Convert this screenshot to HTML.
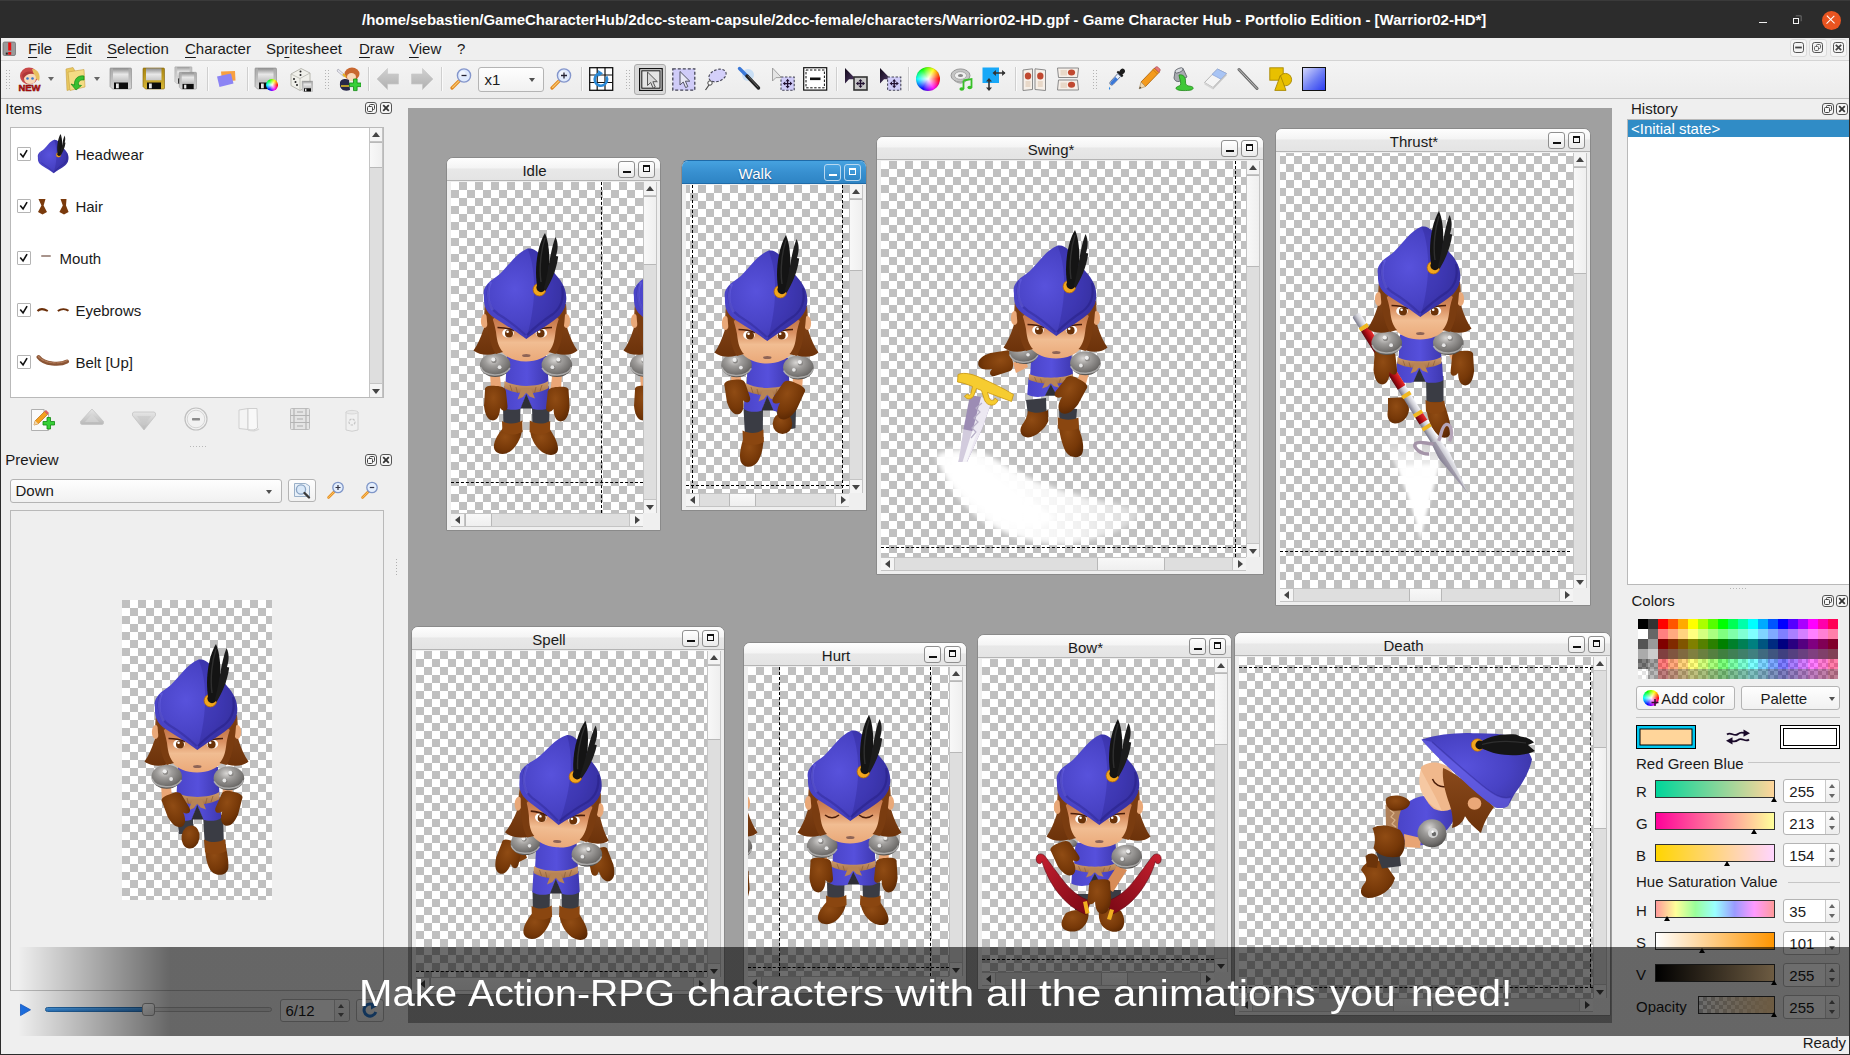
<!DOCTYPE html>
<html><head><meta charset="utf-8"><title>Game Character Hub</title>
<style>
*{margin:0;padding:0;box-sizing:border-box}
html,body{width:1850px;height:1055px;overflow:hidden;background:#efefef;font-family:"Liberation Sans",sans-serif;font-size:15px;color:#1a1a1a}
body{position:relative}
i,b{display:block;position:absolute;font-style:normal;font-weight:normal}
svg{display:block}
#title{position:absolute;left:0;top:0;width:1850px;height:38px;background:#2c2c2c;border-top:1px solid #3a3a3a}
#ttext{position:absolute;left:362px;top:10px;white-space:nowrap;color:#fff;font-weight:bold;font-size:14.98px;line-height:18px}
#wmin{left:1759px;top:20.7px;width:8.2px;height:1.4px;background:#f0f0f0}
#wmax{left:1793px;top:16.5px;width:6.4px;height:6.4px;border:1.3px solid #f4f4f4;box-shadow:2px -2px 0 -0.2px #2c2c2c, 2.6px -2.6px 0 -0.2px #9a9a9a}
#wclose{left:1821.5px;top:9.5px;width:19px;height:19px;border-radius:50%;background:#e95420}
#wclose:before,#wclose:after{content:"";position:absolute;left:3.8px;top:8.8px;width:11.4px;height:1.4px;background:#fff;transform:rotate(45deg)}
#wclose:after{transform:rotate(-45deg)}
#menubar{position:absolute;left:1px;top:38px;width:1848px;height:22px;background:#efefef}
#menubar span{position:absolute;top:2px;line-height:18px;white-space:nowrap}
#menubar u{text-decoration:underline;text-underline-offset:2.5px;text-decoration-thickness:1.4px}
#toolbar{position:absolute;left:1px;top:60px;width:1848px;height:39px;background:linear-gradient(#f4f4f4,#ececec);border-top:1px solid #d4d4d4;border-bottom:1px solid #bdbdbd}
#toolbar2>*{position:absolute}
#mdi{position:absolute;left:408px;top:108px;width:1204px;height:915px;background:#a0a0a0;overflow:hidden}
#status{position:absolute;left:1px;top:1036px;width:1848px;height:18px}
#status span{position:absolute;right:3px;top:-2px;line-height:18px}
#banner{position:absolute;left:0;top:947px;width:1850px;height:89px;background:linear-gradient(90deg,rgba(0,0,0,0) 18px,rgba(0,0,0,.573) 170px)}
#banner span{position:absolute;top:25px;color:#fff;font-size:36.7px;line-height:44px;white-space:nowrap;transform-origin:0 0}
#frame{position:absolute;left:0;top:38px;width:1850px;height:1017px;border:1px solid #2c2c2c;border-top:0;pointer-events:none}
/* dock titles */
.dt{font-size:15px;line-height:18px;white-space:nowrap}
.dbtn{width:11px;height:11px;border:1px solid #555;border-radius:2px}
/* MDI windows */
.win{position:absolute;background:#efefef;border:1px solid #8a8a8a;border-radius:7px 7px 0 0;box-shadow:0 0 0 0 #000}
.win .tb{position:absolute;left:0;right:0;top:0;height:23px;border-radius:6px 6px 0 0;background:linear-gradient(#fefefe,#f4f4f4 45%,#e8e8e8 50%,#e4e4e4);border-bottom:1px solid #b4b4b4}
.win.act .tb{background:linear-gradient(#46a2e0,#3890d0 50%,#2e84c4);border-bottom:1px solid #1e6aa8}
.win.act{border-color:#1e6aa8 #8a8a8a #8a8a8a #8a8a8a}
.tt{position:absolute;top:3.5px;width:120px;text-align:center;line-height:18px;font-size:15px;white-space:nowrap}
.win.act .tt{color:#fff;text-shadow:0 1px 1px #1a4a80}
.bmin,.bmax{top:2.5px;width:17px;height:17px;border:1px solid #8f8f8f;border-radius:3px;background:linear-gradient(#fff,#ebebeb)}
.bmin{right:25px}.bmax{right:5px}
.bmin:after{content:"";position:absolute;left:4px;top:9.5px;width:8px;height:2.2px;background:#111}
.bmax:after{content:"";position:absolute;left:3.6px;top:3.4px;width:5.4px;height:4.2px;border:1.3px solid #111;border-top-width:2.6px}
.win.act .bmin,.win.act .bmax{background:linear-gradient(#4aa4e2,#2f86c6);border-color:#b8d8f0}
.win.act .bmin:after{background:#fff}.win.act .bmax:after{border-color:#fff}
.vp{position:absolute;left:4px;top:24px;overflow:hidden;background:conic-gradient(#c0c0c0 25%,#fff 0 50%,#c0c0c0 0 75%,#fff 0) 0 0/16px 16px}
.vp>*{position:absolute}
.c{position:absolute;overflow:visible}
.dv{width:0;border-left:1px dashed #000}
.dh{height:0;border-top:1px dashed #000}
.vsb{position:absolute;right:3px;top:24px;width:14px;background:#dedede;border-left:1px solid #c4c4c4;border-right:1px solid #c4c4c4}
.hsb{position:absolute;left:4px;bottom:3px;height:14px;background:#dedede;border-top:1px solid #c4c4c4;border-bottom:1px solid #c4c4c4}
.vsb b{left:0;width:12px;background:linear-gradient(90deg,#f8f8f8,#efefef);border-top:1px solid #b8b8b8;border-bottom:1px solid #b8b8b8}
.hsb b{top:0;height:12px;background:linear-gradient(#f8f8f8,#efefef);border-left:1px solid #b8b8b8;border-right:1px solid #b8b8b8}
.au,.ad{left:0;width:12px;height:14px;background:#f4f4f4}
.au{top:0;border-bottom:1px solid #c4c4c4}.ad{bottom:0;border-top:1px solid #c4c4c4}
.al,.ar{top:0;height:12px;width:14px;background:#f4f4f4}
.al{left:0;border-right:1px solid #c4c4c4}.ar{right:0;border-left:1px solid #c4c4c4}
.au:after,.ad:after,.al:after,.ar:after{content:"";position:absolute;width:0;height:0;border:4px solid transparent}
.au:after{left:2px;top:0px;border-bottom:5px solid #444;border-top-width:0;top:4px}
.ad:after{left:2px;top:5px;border-top:5px solid #444;border-bottom-width:0}
.al:after{top:2px;left:4px;border-right:5px solid #444;border-left-width:0}
.ar:after{top:2px;left:5px;border-left:5px solid #444;border-right-width:0}
#left,#right,#toolbar2{position:absolute;left:0;top:0;width:0;height:0;overflow:visible}
#left>*,#right>*{position:absolute}
.lst{background:#fff;border:1px solid #b9b9b9}
.pf{border:1px solid #b9b9b9;background:#efefef}
.ck{background:conic-gradient(#c0c0c0 25%,#fff 0 50%,#c0c0c0 0 75%,#fff 0) 0 0/16px 16px}
.cb{width:14px;height:14px;background:#fff;border:1px solid #b4b4b4;border-radius:1px;overflow:visible}

.combo,.btn,.spin{border:1px solid #b4b4b4;border-radius:3px;background:linear-gradient(#fefefe,#f1f1f1)}
.combo span,.spin span{position:absolute;line-height:18px;white-space:nowrap}
.ca{width:0;height:0;border:3.5px solid transparent;border-top:4.5px solid #505050;border-bottom-width:0}
.spin{background:#fff}
.sa{right:0;top:0;width:15px;height:100%;border-left:1px solid #c8c8c8;background:linear-gradient(#fbfbfb,#ededed);border-radius:0 3px 3px 0}
.sa:before,.sa:after{content:"";position:absolute;left:3px;width:0;height:0;border:3.6px solid transparent}
.sa:before{top:4px;border-bottom:4.6px solid #666;border-top-width:0}
.sa:after{bottom:4px;border-top:4.6px solid #666;border-bottom-width:0}

</style></head><body>
<svg width="0" height="0" style="position:absolute"><defs>
<radialGradient id="gHat" cx="0.38" cy="0.45" r="0.75"><stop offset="0" stop-color="#5852dc"/><stop offset="0.55" stop-color="#4842c4"/><stop offset="1" stop-color="#38329e"/></radialGradient>
<linearGradient id="gFace" x1="0" y1="0" x2="0" y2="1"><stop offset="0" stop-color="#b8683c"/><stop offset="0.38" stop-color="#d98f60"/><stop offset="0.62" stop-color="#f1bd92"/><stop offset="1" stop-color="#eaa878"/></linearGradient>
<linearGradient id="gHair" x1="0" y1="0" x2="0" y2="1"><stop offset="0" stop-color="#8a4a1c"/><stop offset="1" stop-color="#6c320a"/></linearGradient>
<radialGradient id="gMetal" cx="0.42" cy="0.3" r="0.8"><stop offset="0" stop-color="#d8d6d4"/><stop offset="0.3" stop-color="#a09e9c"/><stop offset="0.7" stop-color="#72706e"/><stop offset="1" stop-color="#403e3c"/></radialGradient>
<radialGradient id="gLeather" cx="0.4" cy="0.35" r="0.8"><stop offset="0" stop-color="#904c14"/><stop offset="0.6" stop-color="#763808"/><stop offset="1" stop-color="#542402"/></radialGradient>
<linearGradient id="gTunic" x1="0" y1="0" x2="1" y2="0"><stop offset="0" stop-color="#4a44c8"/><stop offset="0.5" stop-color="#5650dc"/><stop offset="1" stop-color="#3e38b0"/></linearGradient>
<linearGradient id="gBelt" x1="0" y1="0" x2="0" y2="1"><stop offset="0" stop-color="#d09c6c"/><stop offset="1" stop-color="#a87448"/></linearGradient>

<!-- head, front -->
<g id="hat">
<path d="M67.7,28.6 C62,31 57,35 53,39.5 C48,45 44,50 39.8,54 C35,58 31,60 27.9,63.4 C24,68 23,71 23.9,76 C24,81 24,84 25.2,87.3 C27,92 30,95 34.5,97.9 C41,102 47,106 53,109.8 C58,113 62,116 66.3,119.1 C70,116 75,113 79.6,109.8 C86,106 92,102 96.9,97.9 C101,95 103,91 104.8,87.3 C106,83 106.5,80 106.2,76.7 C106,72 104.5,67 102.2,63.4 C100,59 96,55 92.9,51.4 C88,45 84,40 79.6,34.2 C76,30 72,28 67.7,28.6 Z" fill="url(#gHat)"/>
<path d="M67.7,28.6 C72,28 76,30 79.6,34.2 C84,40 88,45 92.9,51.4 C96,55 100,59 102.2,63.4 C104.5,67 106,72 106.2,76.7 C106.5,80 106,83 104.8,87.3 C103,91 101,95 96.9,97.9 C92,102 86,106 79.6,109.8 C75,113 70,116 66.3,119.1 C72,100 80,60 67.7,28.6 Z" fill="#241c86" opacity="0.28"/>
<path d="M29,64 C26,76 28,87 38,94 C48,100 57,107 65.5,115" fill="none" stroke="#2c2690" stroke-width="2.2" opacity="0.45"/>
<path d="M102,66 C104,77 102,87 93,94 C84,100 75,107 67,115" fill="none" stroke="#201a78" stroke-width="2.2" opacity="0.4"/>
<path d="M31,62 C27,70 27,82 33,90" fill="none" stroke="#7a76f0" stroke-width="2.5" opacity="0.35"/>
<circle cx="79.4" cy="69.6" r="6.3" fill="#f2a61c"/><circle cx="79.4" cy="69.6" r="6.3" fill="none" stroke="#b86c08" stroke-width="0.8"/>
<circle cx="81" cy="67.6" r="4.6" fill="#17130f"/>
<path d="M78,70 C73.5,52 77,26 85,13 C90.5,26 91,50 84.5,69 Z" fill="#141414"/>
<path d="M84,68 C88.5,52 90,31 95.5,17 C99,24 97.5,31 96,36 L98.2,36.5 C96.5,50 91,62 85.5,71 Z" fill="#1c1c1c"/>
<path d="M81,62 C79,48 81,30 85,18" fill="none" stroke="#3a3a3a" stroke-width="1.4" opacity="0.7"/>
</g>
<g id="hairback">
<path d="M25,84 C23.5,96 25,104 23.5,109 C21,117 17.5,125 13.5,130.5 C20,136 33,136 42,131 L90,131 C99,136 112,136 117.5,130.5 C113.5,125 110,117 107.5,109 C106,104 107.5,96 106,84 Z" fill="url(#gHair)"/>
<ellipse cx="24.5" cy="101" rx="3.6" ry="7" fill="#e9a878"/>
<ellipse cx="106.5" cy="101" rx="3.6" ry="7" fill="#e9a878"/>
</g>
<g id="facebase">
<path d="M32,102 C32,88 100,88 100,102 C101,126 88,141.5 66,141.5 C44,141.5 31,126 32,102 Z" fill="url(#gFace)"/>
<path d="M26,86 C30,92 34,100 36,112 C37,122 39,128 43,132 L36,134 C30,126 27,110 26,86 Z" fill="#7a3c10"/>
<path d="M105.5,86 C101.5,92 97.5,100 95.5,112 C94.5,122 92.5,128 88.5,132 L95.5,134 C101.5,126 104.5,110 105.5,86 Z" fill="#7a3c10"/>
<ellipse cx="66.3" cy="135.6" rx="4.2" ry="1.5" fill="#8e6456"/>
</g>
<g id="eyes">
<ellipse cx="48" cy="113" rx="5.8" ry="4.6" fill="#fff"/><circle cx="49" cy="113.4" r="4" fill="#6a3208"/><circle cx="47.6" cy="111.8" r="1.3" fill="#fff"/>
<path d="M37.5,107.5 C42,107.5 48,108 54,110.5" fill="none" stroke="#4a1c08" stroke-width="1.7"/>
<ellipse cx="81.4" cy="113" rx="5.8" ry="4.6" fill="#fff"/><circle cx="80.6" cy="113.4" r="4" fill="#6a3208"/><circle cx="79.2" cy="111.8" r="1.3" fill="#fff"/>
<path d="M92,107.5 C87.5,107.5 81.5,108 75.5,110.5" fill="none" stroke="#4a1c08" stroke-width="1.7"/>
</g>
<g id="eyesclosed">
<path d="M41,113 C45,116.5 51,116.5 55,113" fill="none" stroke="#4a1c08" stroke-width="1.5"/>
<path d="M75,113 C79,116.5 85,116.5 89,113" fill="none" stroke="#4a1c08" stroke-width="1.5"/>
</g>
<g id="head"><use href="#hairback"/><use href="#facebase"/><use href="#eyes"/><use href="#hat"/></g>
<g id="headc"><use href="#hairback"/><use href="#facebase"/><use href="#eyesclosed"/><use href="#hat"/></g>

<!-- shoulder pads -->
<g id="padL"><ellipse cx="35.2" cy="144.9" rx="15.3" ry="12" fill="url(#gMetal)"/><path d="M20.5,147 C24,157 44,158 50,148" fill="none" stroke="#c8c8c8" stroke-width="1.5" opacity="0.7"/><circle cx="34" cy="140.4" r="2.6" fill="#8a8886"/><circle cx="33.3" cy="139.5" r="2.1" fill="#f0f0f0"/><circle cx="40.2" cy="148" r="2.4" fill="#807e7c"/><circle cx="39.6" cy="147.2" r="1.9" fill="#e6e6e6"/></g>
<g id="padR"><ellipse cx="96.9" cy="144.9" rx="15.3" ry="12" fill="url(#gMetal)"/><path d="M82,148 C88,158 108,157 111.5,147" fill="none" stroke="#c8c8c8" stroke-width="1.5" opacity="0.7"/><circle cx="99" cy="140.4" r="2.6" fill="#8a8886"/><circle cx="98.3" cy="139.5" r="2.1" fill="#f0f0f0"/><circle cx="93" cy="148" r="2.4" fill="#807e7c"/><circle cx="92.4" cy="147.2" r="1.9" fill="#e6e6e6"/></g>

<!-- gloves -->
<path id="gloveL" d="M25,170 C24,166 30,165 36,166 C42,166 46,168 46,172 L47.5,186 C48,190 45,192 42,190 L40,188 C40,194 38,200 33,200.5 C27,200 25,194 24,186 Z" fill="url(#gLeather)"/>
<path id="gloveR" d="M108.6,171 C109.6,167 103.6,166 97.6,167 C91.6,167 87.6,169 87.6,173 L86.1,187 C85.6,191 88.6,193 91.6,191 L93.6,189 C93.6,195 95.6,201 100.6,201.5 C106.6,201 108.6,195 109.6,187 Z" fill="url(#gLeather)"/>

<!-- torso + belt + skirt -->
<g id="torso">
<path d="M47,136 L87,136 L88.5,164 C80,168 54,168 45.5,164 Z" fill="url(#gTunic)"/>
<path d="M44,166 C55,173 78,173 89,166 L90.2,187 C86,190.5 76,190.5 72,188.5 L66.3,175 L61,188.5 C57,190.5 47,190.5 42.8,187 Z" fill="url(#gTunic)"/>
<path d="M66.3,174 L60.5,188.5 L72.5,188.5 Z" fill="#2e2e36"/>
<path d="M44.5,161 C55,167.5 78,167.5 88.2,161 L88.6,168 C78,175 55,175 44.1,168 Z" fill="url(#gBelt)"/>
<path d="M50,165 l2,6 M56,167 l1.5,6 M76,167 l-1.5,6 M82,165 l-2,6" stroke="#8a5c34" stroke-width="1" fill="none" opacity="0.7"/>
<path d="M61.5,168.5 L71,168.5 L75,178.5 L69.5,176.5 L66.3,172.5 L63,177 L57.5,179.5 Z" fill="#b88454"/>
</g>
<!-- legs idle -->
<g id="legsIdle"><g id="legL">
<path d="M43,186 L60.5,186 L60,208 L43.5,208 Z" fill="#3a3c44"/>
<path d="M43,208 C38,214 33,222 34,228 C36,235.5 46,235.5 52,230 C58,224 62,216 62,208 Z" fill="url(#gLeather)"/>
<path d="M42,201 C48,204.5 56,204.5 62.3,200.5 L62.6,212 C55,215.5 48,215.5 42.4,211.5 Z" fill="#8a4610"/>
</g><g id="legR"><path d="M72,186 L89.6,186 L89,208 L72.5,208 Z" fill="#3a3c44"/><path d="M70,208 C70,216 74,226 82,232 C90,237 98,235.5 98,228.5 C98,222 93,214 89,208 Z" fill="url(#gLeather)"/>
<path d="M69.8,200.5 C76,204.5 84,204.5 90.2,201 L90,211.5 C84,215.5 76,215.5 69.6,212 Z" fill="#8a4610"/>
</g></g>
<g id="armsIdle">
<path d="M30,152 L39.5,152 L41.5,170 L31,170 Z" fill="#eaa676"/><path d="M92.5,152 L102,152 L101,170 L90.5,170 Z" fill="#eaa676"/>
</g>

<symbol id="idle" viewBox="0 0 140 250" overflow="visible"><use href="#legsIdle"/><use href="#armsIdle"/><use href="#torso"/><use href="#gloveL"/><use href="#gloveR"/><use href="#padL"/><use href="#padR"/><use href="#head"/></symbol>
<symbol id="pview" viewBox="0 0 140 250" overflow="visible">
<path d="M46,187 L62,187 L62.5,203 L48,203 Z" fill="#3a3c44"/>
<ellipse cx="59.5" cy="206" rx="9" ry="11.5" transform="rotate(8 59.5 206)" fill="url(#gLeather)"/>
<path d="M72,184 L92,184 L93,217 L74,217 Z" fill="#3a3c44"/>
<path d="M74,214 C74,224 76,236 81,241 C86,245.5 96,245 97.3,237 C98,230 96,222 94.5,213 Z" fill="url(#gLeather)"/>
<path d="M73,208.5 C79,212 88,212 94.2,208 L95,220 C89,224 80,224 74,221 Z" fill="#8a4610"/>
<use href="#armsIdle"/><use href="#torso"/>
<g transform="translate(10.5,-4.5) rotate(-24 36 183)"><use href="#gloveL"/></g>
<g transform="translate(-1,-7) rotate(18 98 184)"><use href="#gloveR"/></g>
<use href="#padL" transform="translate(.5,.8)"/><use href="#padR" transform="translate(1,2.3)"/><use href="#head"/>
</symbol>
<symbol id="walk" viewBox="0 0 140 250" overflow="visible">
<path d="M75,188 L95,188 L94.5,206 C90,208 84,207 80,204 Z" fill="#3a3c44"/>
<ellipse cx="81.5" cy="201.5" rx="9.8" ry="10.5" fill="url(#gLeather)"/>
<path d="M42.5,186 L62,186 L61.8,214 L44,214 Z" fill="#3a3c44"/>
<path d="M42.5,216 C40,224 38,232 39.5,239 C42,246.5 52,246.5 56.5,240 C61,233 62.5,224 62.5,215 Z" fill="url(#gLeather)"/>
<path d="M41.5,208.5 C48,212 56,212 62.4,207.5 L62.8,220 C56,224 48,224 42,220 Z" fill="#8a4610"/>
<use href="#armsIdle"/><use href="#torso"/>
<use href="#gloveL" transform="translate(1,-8.5) rotate(-12 36 183)"/>
<g transform="translate(-12,-6) rotate(28 98 184) scale(1.12) translate(-10.5,-19.7)"><use href="#gloveR"/></g>
<use href="#padL" transform="translate(.3,-1.6)"/><use href="#padR" transform="translate(.5,.6)"/><use href="#head"/></symbol>
<symbol id="swing" viewBox="0 0 140 250" overflow="visible">
<defs><linearGradient id="gSw" x1="0" y1="0" x2="1" y2="0"><stop offset="0" stop-color="#fff" stop-opacity=".92"/><stop offset=".35" stop-color="#fff" stop-opacity=".96"/><stop offset=".65" stop-color="#fff" stop-opacity=".8"/><stop offset=".88" stop-color="#fff" stop-opacity=".5"/><stop offset="1" stop-color="#fff" stop-opacity=".1"/></linearGradient>
<filter id="fBlur" x="-20%" y="-20%" width="140%" height="140%"><feGaussianBlur stdDeviation="2.6"/></filter>
<linearGradient id="gBlade" x1="0" y1="0" x2="1" y2="0"><stop offset="0" stop-color="#8474a4"/><stop offset=".5" stop-color="#a498b8"/><stop offset=".52" stop-color="#f4f4f8"/><stop offset="1" stop-color="#e0e0e8"/></linearGradient></defs>
<g filter="url(#fBlur)"><path d="M-54,238 C-36,228 -10,232 12,246 C40,264 80,280 160,293 C138,312 108,324 76,327.5 C40,328 8,316 -14,298 C-36,278 -48,260 -54,238 Z" fill="url(#gSw)"/>
<path d="M-50,244 C-38,236 -20,240 -6,250 C14,264 36,282 66,300 C50,318 20,312 -8,292 C-30,276 -44,260 -50,244 Z" fill="#fff" opacity=".9"/></g>
<path d="M-20,178 L2.5,182 L-8,212 L-23,245 L-31.5,245 L-26.5,212 Z" fill="#9c8cb4"/>
<path d="M-9,180 L2.5,182 L-8,212 L-23,245 L-27.5,245 L-17,212 Z" fill="#ece8f2"/>
<path d="M-28,212 L-13,215 L-23.5,245 L-31.5,245 Z" fill="#fff" opacity=".55"/>
<path d="M-8,186 l-6,5 l4,4 l-6,6 l4,4 l-6,6 l4,4 l-5,6" fill="none" stroke="#b8b0c8" stroke-width="1.2"/>
<path d="M-32,157.5 C-25,154.5 -15,158 -8,161.5 C2,166 13,171 23.5,177.5 L21.5,184.5 C12,181 4,178 -2.5,175.5 L-1,180.5 C0.5,184.5 4,184 5,181 L8,183.5 C5.5,190 -3,189.5 -5.5,183 L-8.5,173.5 L-13.5,171.5 L-16,178 C-18,183 -23.5,183 -25.5,179 L-22.5,177 C-21,179 -19.5,178 -19,176 L-17.5,169.5 C-22.5,167.5 -27.5,165.5 -32.5,165 Z" fill="#f6cc30" stroke="#c89410" stroke-width=".8"/>
<path d="M36,183 L56,181 L56.5,197 L38,198 Z" fill="#3a3c44"/><path d="M69,190 L87,192 L86,206 L69.5,205 Z" fill="#3a3c44"/>
<path d="M38,194 C46,197 52,196 58,193 L58.4,204 C55,212 46,220 38,220.5 C31,220 28.5,214 32,208 C35,204 37,200 38,194 Z" fill="url(#gLeather)"/>
<path d="M68,201 C74,204 82,204 88,201 L89,212 C93,222 94.5,232 92,237 C89,242 80,241 76,235 C72,228 69,216 68,201 Z" fill="url(#gLeather)"/>
<path d="M67.6,200 C74,203.5 82,203.5 88.4,200.5 L88.8,211 C82,214.5 74,214.5 68,211.5 Z" fill="#8a4610"/>
<g transform="translate(-5.5,28) scale(1,.8)"><use href="#torso"/></g>
<path d="M91,152 L100,153 L95,170 L86,168 Z" fill="#eaa676"/>
<g transform="translate(-19,-6) rotate(32 98 184) scale(1.1) translate(-9,-16.7)"><use href="#gloveR"/></g>
<path d="M23,146 L34,140 L38,150 L26,156 Z" fill="#eaa676"/>
<g transform="translate(-30,-36) rotate(78 36 183)"><use href="#gloveL"/></g>
<use href="#padL" transform="translate(0,-3.6) scale(.96)"/><use href="#padR" transform="translate(-1.5,1.3)"/><use href="#head"/></symbol>
<symbol id="thrust" viewBox="0 0 140 250" overflow="visible">
<defs><linearGradient id="gTr" x1="0" y1="0" x2="0" y2="1"><stop offset="0" stop-color="#fff" stop-opacity=".05"/><stop offset=".2" stop-color="#fff" stop-opacity=".55"/><stop offset=".45" stop-color="#fff" stop-opacity=".95"/><stop offset="1" stop-color="#fff" stop-opacity="1"/></linearGradient>
<linearGradient id="gShaft" x1="0" y1="0" x2="0" y2="1"><stop offset="0" stop-color="#f8f8fc"/><stop offset=".5" stop-color="#c8c8d0"/><stop offset="1" stop-color="#78788a"/></linearGradient>
<linearGradient id="gRed" x1="0" y1="0" x2="0" y2="1"><stop offset="0" stop-color="#e83030"/><stop offset=".55" stop-color="#b00c14"/><stop offset="1" stop-color="#60040a"/></linearGradient><filter id="fBlur2" x="-20%" y="-10%" width="140%" height="120%"><feGaussianBlur stdDeviation="1.8"/></filter></defs>
<g filter="url(#fBlur2)"><path d="M26,236 L94,236 C86,262 74,300 66.5,343 C58,300 40,262 26,236 Z" fill="url(#gTr)"/><path d="M44,268 L86,266 C80,290 72,316 66.5,340 C60,312 52,290 44,268 Z" fill="#fff" opacity=".9"/></g>
<path d="M34,200 L54,199 L55,212 C54,220 48,225.5 41,225.5 C34,225 32.5,218 34,212 Z" fill="url(#gLeather)"/>
<path d="M72,178 L89.5,178 L89.5,206 L72.5,206 Z" fill="#3a3c44"/>
<path d="M72,204 C72,216 76,230 84,237 C90,242 97.5,240 97,232 C96.5,224 93,214 90,204 Z" fill="url(#gLeather)"/>
<path d="M71.5,202 C78,205.5 84,205.5 90.4,202.5 L90.6,213 C84,216.5 78,216.5 72,213.5 Z" fill="#8a4610"/>
<g transform="translate(-1,14) scale(1,.9)"><use href="#torso"/></g>
<g transform="translate(1.9,116.6) rotate(57.9)">
<rect x="0" y="-4.3" width="152" height="8.6" rx="1.5" fill="url(#gShaft)"/>
<rect x="17" y="-4.5" width="69" height="9" fill="url(#gRed)"/>
<rect x="13" y="-4.9" width="4" height="9.8" fill="#f0b820"/><rect x="93" y="-4.9" width="4" height="9.8" fill="#f0b820"/><rect x="115" y="-4.9" width="4" height="9.8" fill="#f0b820"/><rect x="119" y="-4.5" width="8" height="9" fill="url(#gRed)"/><rect x="131" y="-4.9" width="4" height="9.8" fill="#f0b820"/>
<path d="M148,-4.4 L166,-6.2 L211,0 L166,6.2 L148,4.4 Z" fill="url(#gShaft)"/><path d="M150,0 L211,0 L166,6.2 L148,4.4 Z" fill="#8c8498" opacity=".6"/>
<path d="M151,3 C147,9 140,13 141,18 C143,23 153,19 157,12" fill="none" stroke="#a494a8" stroke-width="3.4"/>
<path d="M151,-3 C147,-9 140,-13 141,-18 C143,-23 153,-19 157,-12" fill="none" stroke="#b4a4b8" stroke-width="3.4"/>
</g><path d="M29,152 L39,152 L40,164 L30,164 Z" fill="#eaa676"/>
<use href="#gloveL" transform="translate(-4.5,-14)"/>

<path d="M92,150 L102,150 L108,160 L98,163 Z" fill="#eaa676"/>
<use href="#gloveR" transform="translate(10.5,-14)"/>
<use href="#padL" transform="translate(-2.5,0)"/><use href="#padR" transform="translate(-2.6,0)"/><use href="#head"/></symbol>
<symbol id="spell" viewBox="0 0 140 250" overflow="visible">
<g transform="translate(-7.5,-1)"><use href="#legsIdle"/><use href="#torso"/></g>
<path d="M14,146 L26,140 L30,152 L20,157 Z" fill="#7c3c0a"/>
<g transform="translate(-24.5,-31) rotate(18 36 183)"><use href="#gloveL"/></g>
<path d="M92,150 L104,147 L108,158 L97,162 Z" fill="#7c3c0a"/>
<g transform="translate(6.5,-24.5) rotate(-18 98 184)"><use href="#gloveR"/></g>
<use href="#padL" transform="translate(-5.5,-1.5) scale(.96)"/><use href="#padR" transform="translate(-7,3.5)"/>
<g transform="translate(-2.5,0) rotate(4.5 66 90)"><use href="#head"/></g></symbol>
<symbol id="hurt" viewBox="0 0 140 250" overflow="visible">
<g transform="translate(3,17.5) scale(1,.875)"><use href="#legL" transform="translate(-3,0)"/><use href="#legR" transform="translate(3.5,0)"/><use href="#armsIdle"/><use href="#torso"/></g>
<use href="#gloveL" transform="translate(1.5,-10)"/><use href="#gloveR" transform="translate(4,-11)"/>
<use href="#padL" transform="translate(3,-1)"/><use href="#padR" transform="translate(3,-3.5)"/><use href="#headc"/></symbol>
<symbol id="bow" viewBox="0 0 140 250" overflow="visible">
<defs><linearGradient id="gBow" x1="0" y1="0" x2="1" y2="1"><stop offset="0" stop-color="#c82030"/><stop offset="1" stop-color="#780814"/></linearGradient></defs>
<path d="M41,188 L56,188 L55,204 L42,204 Z" fill="#3a3c44"/><path d="M76,184 L88,184 L87,204 L76,204 Z" fill="#3a3c44"/>
<path d="M33,207 C40,203 50,203 55.5,207 C56,214 52,222 44,225 C36,227 28,224 28.5,217 C29,213 31,210 33,207 Z" fill="url(#gLeather)"/>
<path d="M66,206 C72,202 82,202 88,205 C92,211 92.5,220 88,224 C82,228 72,225 68,218 C66,214 65.5,210 66,206 Z" fill="url(#gLeather)"/>
<g transform="translate(-4.5,28) scale(1,.8)"><use href="#torso"/></g>
<path d="M13,151.5 C9,145 1.5,148 3.5,155 C4.5,158.5 8.5,158.5 9,155.5 C12,166 18,178 26,188 C34,198 44,205 53,208.5 L57.5,195 C47,192 37,184 29,173 C22,164 17,157 13,151.5 Z" fill="url(#gBow)" stroke="#5c0610" stroke-width=".6"/>
<g transform="translate(131.4,0) scale(-1,1)"><path d="M13,151.5 C9,145 1.5,148 3.5,155 C4.5,158.5 8.5,158.5 9,155.5 C12,166 18,178 26,188 C34,198 44,205 53,208.5 L57.5,195 C47,192 37,184 29,173 C22,164 17,157 13,151.5 Z" fill="url(#gBow)" stroke="#5c0610" stroke-width=".6"/></g>
<path d="M50,196 l4,-1 l2.5,12 l-4,1 z M77,203 l4,1 l-3,10 l-4,-1 z" fill="#f0b020"/>
<ellipse cx="34.5" cy="137.5" rx="9.5" ry="5" fill="url(#gMetal)"/>
<g transform="translate(-2,-31) rotate(-28 36 183)"><use href="#gloveL"/></g>
<path d="M84,160 L94,164 L80,186 L71,180 Z" fill="#d88c58"/>
<use href="#gloveR" transform="translate(-31.5,6.5)"/>
<use href="#padR" transform="translate(-3.2,5.8) scale(1)"/><use href="#head"/></symbol>
<symbol id="death" viewBox="0 0 400 400" overflow="visible"><g transform="translate(101,53)">
<path d="M21,160 C24,152 34,148 44,152 L55,168 C52,180 40,188 28,188 C20,187 19,180 24,174 C28,170 26,166 21,160 Z" fill="url(#gLeather)"/>
<path d="M25.5,146 C30,142 36,143 38.5,148 L37,158 L27,157 Z" fill="#6c340a"/>
<path d="M36,142 L59,140 L61,156 L42,158.5 Z" fill="#3a3c44"/>
<path d="M45.5,95 C52,91 60,95 63,103 L64,122 C58,124 50,122 46,116 Z" fill="#b08058"/>
<path d="M50,100 l4,3 l-3,4 l4,3 l-3,4 l4,3" fill="none" stroke="#d8b088" stroke-width="1.2"/>
<path d="M62,98 C74,84 92,82 108,92 L115,108 C107,124 93,134 77,136 L60,131 C56,120 58,106 62,98 Z" fill="url(#gTunic)"/>
<path d="M46.5,88 C54,83.5 66,85.5 70,92 C70,98.5 62,101.5 52,100.5 C46.5,98 44.5,92 46.5,88 Z" fill="url(#gLeather)"/>
<path d="M64,124 L81,128 L80,138 L65,137 Z" fill="#e8a474"/>
<path d="M32.5,118 C40,113.5 52,115.5 60,120 C66.5,128 66.5,140 60,146.5 C50,148.5 38,146.5 33.5,138 C35.5,132 35.5,126 32.5,118 Z" fill="url(#gLeather)"/>
<ellipse cx="92" cy="123.3" rx="14.5" ry="14" fill="url(#gMetal)"/><circle cx="93" cy="123" r="5" fill="#d4d4d4"/><circle cx="94" cy="124" r="2.2" fill="#6a6a6a"/><circle cx="92.6" cy="121.8" r="1.2" fill="#fff"/>
<path d="M81,57 C88,51 100,51 108,57 C117,65 121,80 118,93 C113,101 103,103 94,99 C85,93 79,76 81,57 Z" fill="#f0b88c"/>
<path d="M81,60 C78,68 79,78 83,85 C87,92 94,98 102,101 L96,88 Z" fill="#f6c8a2"/>
<path d="M92.5,69 C94.5,74.5 100,77.5 105.5,76.5" fill="none" stroke="#4a1c08" stroke-width="1.5"/>
<path d="M103,58 C116,63 140,82 154,97 C149,104 144,112 141,123 C135,118 129,113 125,106 C123,112 119,116 112,118 C114,107 111,98 108,90 C105,80 102,70 103,58 Z" fill="url(#gHair)"/>
<ellipse cx="134.5" cy="93.5" rx="6.8" ry="6.2" fill="#eaa878"/>
<path d="M81.5,29.4 C98,24.5 116,22.5 133,23.2 C146,23 160,23.5 171,26 C181,31 189,40 192,49.3 C189.5,62 182,74 174.5,84 L168,96 C164,98.5 159,98.5 155.5,97.5 C143,89 132,79 121.4,69 C112,60.5 103,52.5 94.8,44 C90,38.5 85,34 81.5,29.4 Z" fill="url(#gHat)"/>
<path d="M81.5,29.4 C85,34 90,38.5 94.8,44 C103,52.5 112,60.5 121.4,69 C132,79 143,89 155.5,97.5 C159,98.5 164,98.5 168,96 L171,87 C162,90 153,84 143,76 C128,64 108,46 92,32 Z" fill="#6a64ea" opacity=".6"/>
<path d="M92,32 C108,46 128,64 143,76 C153,84 162,90 171,87" fill="none" stroke="#2c2690" stroke-width="1.4" opacity=".45"/>
<circle cx="137.5" cy="35" r="6.2" fill="#f2a61c" stroke="#b86c08" stroke-width=".7"/><circle cx="139.8" cy="35" r="4.4" fill="#17130f"/>
<path d="M137,35 C146,26.5 160,23.5 176,24.5 L180.5,26.5 C186,27 191.5,29.5 194,32.5 L188,35 L195,41 C186,45.5 170,46.5 156,43.5 C148,41.5 141,38.5 137,35 Z" fill="#151515"/>
<path d="M142,34.5 C154,31 170,30.5 186,33" fill="none" stroke="#3a3a3a" stroke-width="1.2" opacity=".7"/>
</g></symbol>
</defs>
</svg>
<div id="title"><span id="ttext">/home/sebastien/GameCharacterHub/2dcc-steam-capsule/2dcc-female/characters/Warrior02-HD.gpf - Game Character Hub - Portfolio Edition - [Warrior02-HD*]</span>
<i id="wmin"></i><i id="wmax"></i><i id="wclose"></i></div>
<div id="menubar"><span style="left:27px"><u>F</u>ile</span><span style="left:65px"><u>E</u>dit</span><span style="left:106px"><u>S</u>election</span><span style="left:184px"><u>C</u>haracter</span><span style="left:265px">Sp<u>r</u>itesheet</span><span style="left:358px"><u>D</u>raw</span><span style="left:408px"><u>V</u>iew</span><span style="left:456px">?</span>
</div>
<div id="toolbar"></div><div id="toolbar2"><defs></defs>
<i style="left:6px;top:70px;width:4px;height:19px;background:radial-gradient(circle at 0.5px 0.5px,#b4b4b4 0.6px,transparent 0.8px) 0 0/3px 3px"></i>
<svg style="left:17px;top:66px" width="26" height="26" viewBox="0 0 26 26"><ellipse cx="12" cy="10" rx="9" ry="8.5" fill="#c84848"/><path d="M15,3 C21,3 24,9 22,15 L18,12 Z" fill="#e8c060"/><ellipse cx="13" cy="12.5" rx="6" ry="5.5" fill="#f8d8b8"/><circle cx="10.5" cy="12.5" r="1.3" fill="#3878c8"/><circle cx="15.5" cy="12.5" r="1.3" fill="#3878c8"/><path d="M5,9 C8,5 14,4 17,8 C13,7 9,8 6,13 Z" fill="#b03838"/><text x="12.5" y="24.5" font-family="Liberation Sans" font-weight="bold" font-size="9.5" text-anchor="middle" fill="#e01818" stroke="#600" stroke-width=".5">NEW</text></svg>
<i style="left:48.2px;top:77px;width:0;height:0;border:3.5px solid transparent;border-top:4.5px solid #666;border-bottom-width:0"></i>
<svg style="left:64px;top:66px" width="24" height="26" viewBox="0 0 24 26"><path d="M2,3 L9,1.5 L11,5 L11,22 L3,24.5 Z" fill="#e8c860" stroke="#c8a040" stroke-width=".6"/><path d="M4,6 L20,3.5 L21,21 L6,24.5 Z" fill="#f4dc84" stroke="#c8a040" stroke-width=".6"/><path d="M20,10 C14,9 10,13 10.5,19 L7,18 L12,24 L17.5,19.5 L14.5,19 C14,15.5 16,13.5 20,14 Z" fill="#38c030" stroke="#188818" stroke-width=".7"/></svg>
<i style="left:93.7px;top:77px;width:0;height:0;border:3.5px solid transparent;border-top:4.5px solid #666;border-bottom-width:0"></i>
<svg style="left:109px;top:67px" width="24" height="23" viewBox="0 0 24 23"><defs><linearGradient id="fl1" x1="0" y1="0" x2="0" y2="1"><stop offset="0" stop-color="#a8a8a8"/><stop offset="1" stop-color="#d4d4d4"/></linearGradient><linearGradient id="fs1" x1="0" y1="0" x2="0" y2="1"><stop offset="0" stop-color="#8c8c8c"/><stop offset=".5" stop-color="#e8e8e8"/><stop offset="1" stop-color="#c8c8c8"/></linearGradient></defs><path d="M1.5,1 H21.5 Q22.5,1 22.5,2 V21 Q22.5,22 21.5,22 H3.5 L1,19.5 V2 Q1,1 1.5,1 Z" fill="url(#fl1)" stroke="#888" stroke-width=".6"/><rect x="4" y="1.3" width="15.5" height="12" fill="url(#fs1)"/><rect x="5" y="15.5" width="14" height="6.5" fill="#0c0c0c"/><rect x="7" y="16.5" width="2.8" height="4.8" fill="#e8e8e8"/></svg>
<svg style="left:141.5px;top:67px" width="24" height="23" viewBox="0 0 24 23"><defs><linearGradient id="fl2" x1="0" y1="0" x2="0" y2="1"><stop offset="0" stop-color="#a88410"/><stop offset="1" stop-color="#d8b838"/></linearGradient><linearGradient id="fs2" x1="0" y1="0" x2="0" y2="1"><stop offset="0" stop-color="#8c8c8c"/><stop offset=".5" stop-color="#e8e8e8"/><stop offset="1" stop-color="#c8c8c8"/></linearGradient></defs><path d="M1.5,1 H21.5 Q22.5,1 22.5,2 V21 Q22.5,22 21.5,22 H3.5 L1,19.5 V2 Q1,1 1.5,1 Z" fill="url(#fl2)" stroke="#806008" stroke-width=".6"/><rect x="4" y="1.3" width="15.5" height="12" fill="url(#fs2)"/><rect x="5" y="15.5" width="14" height="6.5" fill="#0c0c0c"/><rect x="7" y="16.5" width="2.8" height="4.8" fill="#e8e8e8"/></svg>
<svg style="left:174px;top:66px" width="24" height="25" viewBox="0 0 24 25"><g opacity=".85" transform="translate(0,0) scale(.8)"><defs><linearGradient id="fl3" x1="0" y1="0" x2="0" y2="1"><stop offset="0" stop-color="#b4b4b4"/><stop offset="1" stop-color="#dcdcdc"/></linearGradient><linearGradient id="fs3" x1="0" y1="0" x2="0" y2="1"><stop offset="0" stop-color="#8c8c8c"/><stop offset=".5" stop-color="#e8e8e8"/><stop offset="1" stop-color="#c8c8c8"/></linearGradient></defs><path d="M1.5,1 H21.5 Q22.5,1 22.5,2 V21 Q22.5,22 21.5,22 H3.5 L1,19.5 V2 Q1,1 1.5,1 Z" fill="url(#fl3)" stroke="#999" stroke-width=".6"/><rect x="4" y="1.3" width="15.5" height="12" fill="url(#fs3)"/><rect x="5" y="15.5" width="14" height="6.5" fill="#0c0c0c"/><rect x="7" y="16.5" width="2.8" height="4.8" fill="#e8e8e8"/></g><g transform="translate(4.5,5.5) scale(.8)"><defs><linearGradient id="fl4" x1="0" y1="0" x2="0" y2="1"><stop offset="0" stop-color="#a8a8a8"/><stop offset="1" stop-color="#d4d4d4"/></linearGradient><linearGradient id="fs4" x1="0" y1="0" x2="0" y2="1"><stop offset="0" stop-color="#8c8c8c"/><stop offset=".5" stop-color="#e8e8e8"/><stop offset="1" stop-color="#c8c8c8"/></linearGradient></defs><path d="M1.5,1 H21.5 Q22.5,1 22.5,2 V21 Q22.5,22 21.5,22 H3.5 L1,19.5 V2 Q1,1 1.5,1 Z" fill="url(#fl4)" stroke="#888" stroke-width=".6"/><rect x="4" y="1.3" width="15.5" height="12" fill="url(#fs4)"/><rect x="5" y="15.5" width="14" height="6.5" fill="#0c0c0c"/><rect x="7" y="16.5" width="2.8" height="4.8" fill="#e8e8e8"/></g></svg>
<i style="left:207px;top:67px;width:1px;height:24px;background:#cfcfcf"></i><i style="left:208px;top:67px;width:1px;height:24px;background:#fafafa"></i>
<svg style="left:216px;top:70px" width="21" height="18" viewBox="0 0 21 18"><path d="M5,1.5 L19,1 L19.5,10.5 L6,11.5 Z" fill="#f8a040"/><path d="M1,6.5 L15,3.5 L17.5,13.5 L3.5,17 Z" fill="#8c84f4"/></svg>
<i style="left:246.5px;top:67px;width:1px;height:24px;background:#cfcfcf"></i><i style="left:247.5px;top:67px;width:1px;height:24px;background:#fafafa"></i>
<svg style="left:254px;top:67px" width="25" height="24" viewBox="0 0 25 24"><defs><linearGradient id="fl5" x1="0" y1="0" x2="0" y2="1"><stop offset="0" stop-color="#a8a8a8"/><stop offset="1" stop-color="#d4d4d4"/></linearGradient><linearGradient id="fs5" x1="0" y1="0" x2="0" y2="1"><stop offset="0" stop-color="#8c8c8c"/><stop offset=".5" stop-color="#e8e8e8"/><stop offset="1" stop-color="#c8c8c8"/></linearGradient></defs><path d="M1.5,1 H21.5 Q22.5,1 22.5,2 V21 Q22.5,22 21.5,22 H3.5 L1,19.5 V2 Q1,1 1.5,1 Z" fill="url(#fl5)" stroke="#888" stroke-width=".6"/><rect x="4" y="1.3" width="15.5" height="12" fill="url(#fs5)"/><rect x="5" y="15.5" width="14" height="6.5" fill="#0c0c0c"/><rect x="7" y="16.5" width="2.8" height="4.8" fill="#e8e8e8"/></svg>
<svg style="left:289px;top:67px" width="24" height="25" viewBox="0 0 24 25"><path d="M2,7 L12,1.5 L21,6 L21,18 L11,23.5 L2,18.5 Z" fill="#f0f0ea" stroke="#a8a8a0" stroke-width=".8"/><path d="M2,7 L11,11.5 L21,6 M11,11.5 V23.5" fill="none" stroke="#b8b8b0" stroke-width=".8"/><circle cx="11.5" cy="4.5" r="1" fill="#222"/><circle cx="11.5" cy="8" r="1" fill="#222"/><circle cx="5" cy="12" r="1" fill="#222"/><circle cx="8" cy="18" r="1" fill="#222"/><circle cx="6.5" cy="15" r="1" fill="#222"/><g transform="translate(12.5,13.5) scale(.5)"><defs><linearGradient id="fl6" x1="0" y1="0" x2="0" y2="1"><stop offset="0" stop-color="#a8a8a8"/><stop offset="1" stop-color="#d4d4d4"/></linearGradient><linearGradient id="fs6" x1="0" y1="0" x2="0" y2="1"><stop offset="0" stop-color="#8c8c8c"/><stop offset=".5" stop-color="#e8e8e8"/><stop offset="1" stop-color="#c8c8c8"/></linearGradient></defs><path d="M1.5,1 H21.5 Q22.5,1 22.5,2 V21 Q22.5,22 21.5,22 H3.5 L1,19.5 V2 Q1,1 1.5,1 Z" fill="url(#fl6)" stroke="#888" stroke-width=".6"/><rect x="4" y="1.3" width="15.5" height="12" fill="url(#fs6)"/><rect x="5" y="15.5" width="14" height="6.5" fill="#0c0c0c"/><rect x="7" y="16.5" width="2.8" height="4.8" fill="#e8e8e8"/></g></svg>
<i style="left:325px;top:70px;width:4px;height:19px;background:radial-gradient(circle at 0.5px 0.5px,#b4b4b4 0.6px,transparent 0.8px) 0 0/3px 3px"></i>
<svg style="left:336px;top:66px" width="25" height="27" viewBox="0 0 25 27"><ellipse cx="16" cy="8" rx="7.5" ry="6.5" fill="#c86830"/><ellipse cx="15.5" cy="11" rx="4.5" ry="4" fill="#f8d8b8"/><path d="M2,3 L9,9 L7.5,10.5 L1,5 Z" fill="#e8e8f0" stroke="#889" stroke-width=".5"/><path d="M7,8 l3,3" stroke="#e8b020" stroke-width="2"/><path d="M4,17 C4,13 10,12 13,14 L14,24 C9,26 3,24 4,17 Z" fill="#282848"/><path d="M5,20 h8" stroke="#e8c020" stroke-width="1.5"/><path d="M13.5,17 h4 v-4 h3.6 v4 h4 v3.6 h-4 v4 h-3.6 v-4 h-4 z" fill="#38d038" stroke="#108810" stroke-width=".8"/></svg>
<i style="left:368px;top:67px;width:1px;height:24px;background:#cfcfcf"></i><i style="left:369px;top:67px;width:1px;height:24px;background:#fafafa"></i>
<svg style="left:376px;top:67px" width="24" height="24" viewBox="0 0 24 24"><defs><linearGradient id="ga" x1="0" y1="0" x2="0" y2="1"><stop offset="0" stop-color="#d0d0d0"/><stop offset="1" stop-color="#b0b0b0"/></linearGradient></defs><path d="M1,12 L11.5,1.5 V7 H22.5 V17 H11.5 V22.5 Z" fill="url(#ga)" stroke="#c8c8c8" stroke-width=".7"/></svg>
<svg style="left:409.5px;top:67px" width="24" height="24" viewBox="0 0 24 24"><path d="M23,12 L12.5,1.5 V7 H1.5 V17 H12.5 V22.5 Z" fill="url(#ga)" stroke="#c8c8c8" stroke-width=".7"/></svg>
<i style="left:441px;top:67px;width:1px;height:24px;background:#cfcfcf"></i><i style="left:442px;top:67px;width:1px;height:24px;background:#fafafa"></i>
<svg style="left:449.5px;top:67px" width="23" height="24" viewBox="0 0 23 24"><path d="M9.5,13.5 L2,21" stroke="#e08820" stroke-width="3.2" stroke-linecap="round"/><path d="M9.5,13.5 L2.5,20.5" stroke="#f8c870" stroke-width="1.1" stroke-linecap="round"/><circle cx="14" cy="8.5" r="6.6" fill="#dfeafc" stroke="#8496cc" stroke-width="1.4"/><circle cx="12.5" cy="7" r="3" fill="#fff" opacity=".6"/><path d="M11.5,8.5 h5" stroke="#223" stroke-width="1.3" fill="none"/></svg>
<div class="combo" style="left:478px;top:67px;width:65.5px;height:24.5px"><span style="left:5.5px;top:3px">x1</span><i class="ca" style="left:50px;top:10px"></i></div>
<svg style="left:550px;top:67px" width="23" height="24" viewBox="0 0 23 24"><path d="M9.5,13.5 L2,21" stroke="#e08820" stroke-width="3.2" stroke-linecap="round"/><path d="M9.5,13.5 L2.5,20.5" stroke="#f8c870" stroke-width="1.1" stroke-linecap="round"/><circle cx="14" cy="8.5" r="6.6" fill="#dfeafc" stroke="#8496cc" stroke-width="1.4"/><circle cx="12.5" cy="7" r="3" fill="#fff" opacity=".6"/><path d="M11,8.5 h6 M14,5.5 v6" stroke="#223" stroke-width="1.3" fill="none"/></svg>
<i style="left:581px;top:67px;width:1px;height:24px;background:#cfcfcf"></i><i style="left:582px;top:67px;width:1px;height:24px;background:#fafafa"></i>
<svg style="left:589px;top:67px" width="25" height="24" viewBox="0 0 25 24"><rect x=".7" y=".7" width="23" height="22.6" fill="#fff" stroke="#111" stroke-width="1.3"/><path d="M.7,8 H23.7 M.7,15.5 H23.7 M8.2,.7 V23.3 M16,.7 V23.3" stroke="#111" stroke-width="1.2"/><path d="M17.3,9.5 A6.2,6.2 0 1 1 10,6.6" fill="none" stroke="#2a8ad8" stroke-width="2.6"/><path d="M9,3 L14,6.3 L9.5,9.8 Z" fill="#2a8ad8"/></svg>
<i style="left:626px;top:70px;width:4px;height:19px;background:radial-gradient(circle at 0.5px 0.5px,#b4b4b4 0.6px,transparent 0.8px) 0 0/3px 3px"></i>
<i style="left:634px;top:64px;width:32px;height:31px;border:1px solid #ababab;border-radius:3px;background:#d9d9d9"></i>
<svg style="left:638.5px;top:67.5px" width="24" height="23" viewBox="0 0 24 23"><rect x=".6" y=".6" width="22.6" height="21.8" fill="#e4e4e4" stroke="#111" stroke-width="1.2"/><rect x="2.8" y="2.8" width="18.2" height="17.4" fill="none" stroke="#111" stroke-width="1"/><path d="M8.5,4 l0,13.5 l3.2,-3 l2.4,5.6 l2.2,-1 l-2.4,-5.4 l4.4,0 z" fill="#d8d8d8" stroke="#555" stroke-width="1" stroke-linejoin="round"/></svg>
<svg style="left:671.5px;top:67.5px" width="24" height="23" viewBox="0 0 24 23"><rect x=".8" y=".8" width="22" height="21.4" fill="#d0ccf8" stroke="#445" stroke-width="1.3" stroke-dasharray="3 2"/><path d="M8,3.5 l0,13.5 l3.2,-3 l2.4,5.6 l2.2,-1 l-2.4,-5.4 l4.4,0 z" fill="#e8e8f4" stroke="#556" stroke-width="1" stroke-linejoin="round"/></svg>
<svg style="left:704px;top:67px" width="24" height="24" viewBox="0 0 24 24"><ellipse cx="13.5" cy="8.5" rx="9" ry="5.8" transform="rotate(-22 13.5 8.5)" fill="#d4d0fa" stroke="#445" stroke-width="1.1" stroke-dasharray="2.6 1.6"/><circle cx="6" cy="16" r="2.2" fill="#fff" stroke="#444" stroke-width="1"/><path d="M5,18 L1.5,23" stroke="#444" stroke-width="1.2"/></svg>
<svg style="left:737px;top:66px" width="25" height="26" viewBox="0 0 25 26"><circle cx="11" cy="9" r="6" fill="#a8d0f8" opacity=".55"/><path d="M2.5,2.5 L10,10" stroke="#3a78d8" stroke-width="3.4" stroke-linecap="round"/><path d="M10,10 L21.5,22" stroke="#222" stroke-width="3.4" stroke-linecap="round"/><path d="M11,10 L21,21" stroke="#666" stroke-width="1" stroke-linecap="round"/></svg>
<svg style="left:771px;top:67px" width="24" height="24" viewBox="0 0 24 24"><rect x="10" y="10" width="13.2" height="13.2" fill="#d0ccf8" stroke="#445" stroke-width="1.1" stroke-dasharray="2.4 1.6"/><path d="M16.6,13.3 V19.900000000000002 M13.3,16.6 H19.900000000000002" stroke="#201030" stroke-width="1.3"/><path d="M16.6,11.8 l2,2.4 h-4 z M16.6,21.400000000000002 l2,-2.4 h-4 z M11.8,16.6 l2.4,-2 v4 z M21.400000000000002,16.6 l-2.4,-2 v4 z" fill="#201030"/><path d="M1.5,1 l0,13 l3.4,-3.4 l5.6,0 z" fill="#e4e4e4" stroke="#9a9a9a" stroke-width=".9"/></svg>
<svg style="left:803px;top:67px" width="25" height="24" viewBox="0 0 25 24"><rect x=".7" y=".7" width="23" height="22.4" fill="#fff" stroke="#111" stroke-width="1.2"/><rect x="3" y="3" width="18.4" height="17.8" fill="none" stroke="#111" stroke-width="1" stroke-dasharray="2.4 1.6"/><rect x="7" y="10.5" width="10.5" height="2.6" fill="#111"/></svg>
<i style="left:835.5px;top:67px;width:1px;height:24px;background:#cfcfcf"></i><i style="left:836.5px;top:67px;width:1px;height:24px;background:#fafafa"></i>
<svg style="left:843.5px;top:67px" width="24" height="24" viewBox="0 0 24 24"><defs><linearGradient id="gp1" x1="0" y1="0" x2="1" y2="1"><stop offset="0" stop-color="#100818"/><stop offset="1" stop-color="#584070"/></linearGradient></defs><path d="M1,1 l0,15.5 l4,-4.2 l7,0 z" fill="url(#gp1)"/><rect x="10" y="10" width="13" height="13" fill="#c8c8c8" stroke="#333" stroke-width="1.6"/><path d="M16.5,13.4 V19.6 M13.4,16.5 H19.6" stroke="#201030" stroke-width="1.3"/><path d="M16.5,11.9 l2,2.4 h-4 z M16.5,21.1 l2,-2.4 h-4 z M11.9,16.5 l2.4,-2 v4 z M21.1,16.5 l-2.4,-2 v4 z" fill="#201030"/></svg>
<svg style="left:878.5px;top:67px" width="23" height="24" viewBox="0 0 23 24"><defs><linearGradient id="gp2" x1="0" y1="0" x2="1" y2="1"><stop offset="0" stop-color="#100818"/><stop offset="1" stop-color="#584070"/></linearGradient></defs><path d="M1,1 l0,15.5 l4,-4.2 l7,0 z" fill="url(#gp2)"/><rect x="8.6" y="10" width="13.2" height="13.2" fill="#d0ccf8" stroke="#445" stroke-width="1.1" stroke-dasharray="2.4 1.6"/><path d="M15.2,13.500000000000002 V19.700000000000003 M12.1,16.6 H18.299999999999997" stroke="#201030" stroke-width="1.3"/><path d="M15.2,12.000000000000002 l2,2.4 h-4 z M15.2,21.200000000000003 l2,-2.4 h-4 z M10.6,16.6 l2.4,-2 v4 z M19.799999999999997,16.6 l-2.4,-2 v4 z" fill="#201030"/></svg>
<i style="left:908px;top:67px;width:1px;height:24px;background:#cfcfcf"></i><i style="left:909px;top:67px;width:1px;height:24px;background:#fafafa"></i>
<i style="left:916px;top:67px;width:24px;height:24px;border-radius:50%;background:radial-gradient(closest-side,#fff 0,rgba(255,255,255,0) 95%),conic-gradient(from 90deg,#f00,#f0f,#00f,#0ff,#0f0,#ff0,#f00);box-shadow:inset 0 0 1px #666"></i>
<svg style="left:950px;top:67px" width="24" height="25" viewBox="0 0 24 25"><ellipse cx="10.5" cy="8.5" rx="9.5" ry="6.6" fill="#c4c4c4" stroke="#888" stroke-width=".8"/><ellipse cx="10.5" cy="8.5" rx="6" ry="3.8" fill="#f0f0f0" stroke="#999" stroke-width=".7"/><ellipse cx="10.5" cy="8.5" rx="2.6" ry="1.6" fill="#888"/><path d="M5,14 Q10.5,18 16,14" fill="none" stroke="#aaa" stroke-width="1.5"/><path d="M13.5,13.5 L21.5,12 V20.5 M13.5,13.5 V22" stroke="#38c028" stroke-width="1.8" fill="none"/><ellipse cx="11.8" cy="22" rx="2.4" ry="1.8" fill="#38c028"/><ellipse cx="19.8" cy="20.5" rx="2.4" ry="1.8" fill="#38c028"/></svg>
<svg style="left:981.5px;top:67px" width="24" height="24" viewBox="0 0 24 24"><rect x=".5" y=".5" width="16.5" height="15.5" fill="#18a8f8"/><path d="M12,6 H23 M7,12.5 V23" stroke="#333" stroke-width="1.6"/><path d="M10.5,6 l3.4,-3 v6 z M23.5,6 l-3.4,-3 v6 z M7,11 l-3,3.4 h6 z M7,24 l-3,-3.4 h6 z" fill="#333"/></svg>
<i style="left:1014.5px;top:67px;width:1px;height:24px;background:#cfcfcf"></i><i style="left:1015.5px;top:67px;width:1px;height:24px;background:#fafafa"></i>
<svg style="left:1021.5px;top:68px" width="25" height="23" viewBox="0 0 25 23"><path d="M1,2 L10.5,.8 V21.5 L1,22.5 Z" fill="#f6efe8" stroke="#8a8a8a"/><path d="M13,.8 L23.5,2 V22.5 L13,21.5 Z" fill="#f6efe8" stroke="#8a8a8a"/><ellipse cx="6" cy="8" rx="3.2" ry="3.6" fill="#c04830"/><ellipse cx="18.3" cy="8" rx="3.2" ry="3.6" fill="#c04830"/><path d="M3.5,13 h5 v6 h-5 z M15.8,13 h5 v6 h-5 z" fill="#e8d8c8"/></svg>
<svg style="left:1055.5px;top:67px" width="24" height="24" viewBox="0 0 24 24"><path d="M1.5,1 L22.5,1 L21.5,10.5 H2.5 Z" fill="#f6efe8" stroke="#8a8a8a"/><path d="M2.5,13 H21.5 L22.5,23 H1.5 Z" fill="#f6efe8" stroke="#8a8a8a"/><ellipse cx="15.5" cy="5.5" rx="3.6" ry="3" fill="#c04830"/><ellipse cx="15.5" cy="17.8" rx="3.6" ry="3" fill="#c04830"/><path d="M4.5,3 h6.5 v5.5 h-6.5 z M4.5,15.5 h6.5 v5.5 h-6.5 z" fill="#e8d8c8"/></svg>
<i style="left:1092.5px;top:70px;width:4px;height:19px;background:radial-gradient(circle at 0.5px 0.5px,#b4b4b4 0.6px,transparent 0.8px) 0 0/3px 3px"></i>
<svg style="left:1106.5px;top:67px" width="20" height="25" viewBox="0 0 20 25"><path d="M13,3.2 Q15,0.5 17.2,2.2 Q19,4 17,6.2 L15.4,7.6 L16.4,8.8 L14.8,10.2 L9.6,5.2 L11,3.8 L12.2,4.8 Z" fill="#1c1c1c"/><path d="M10.8,6.6 L13.6,9.4 L6,17.6 Q4.4,18.8 3.2,17.4 Q2.2,16 3.4,14.6 Z" fill="#e8f0fc" stroke="#5a6a88" stroke-width=".9"/><path d="M8.4,10 L11,12.4 L5.8,17.4 Q4.6,18.2 3.6,17.2 Q3,16 3.8,15 Z" fill="#3a78d8"/><path d="M2.6,19.5 Q4,21.5 2.6,23 Q1.2,21.5 2.6,19.5 Z" fill="#2a88e8"/></svg>
<svg style="left:1138px;top:66px" width="23" height="26" viewBox="0 0 23 26"><path d="M16.5,2 L21,6.5 L7.5,20.5 L3,16 Z" fill="#f49a1c" stroke="#a86008" stroke-width=".8"/><path d="M15,3.6 L19.4,8" stroke="#c87810" stroke-width="1"/><path d="M16.5,2 L18.2,.8 Q19.2,.4 20,1.2 L21.8,3 Q22.6,3.8 22,4.8 L21,6.5 Z" fill="#e87878" stroke="#a04040" stroke-width=".6"/><path d="M3,16 L7.5,20.5 L1.2,22.8 Z" fill="#f0d8b0" stroke="#a88858" stroke-width=".6"/><path d="M1.2,22.8 L3.4,22 L2,20.6 Z" fill="#333"/></svg>
<svg style="left:1170px;top:66px" width="25" height="27" viewBox="0 0 25 27"><path d="M5,6 L13,2.5 L17,11 L9,15.5 Q5,16 4,12 Z" fill="#a8aab0" stroke="#60646c" stroke-width=".9"/><ellipse cx="9" cy="4.4" rx="4.4" ry="2" transform="rotate(-24 9 4.4)" fill="#d8dade" stroke="#60646c" stroke-width=".8"/><path d="M9,9 C13,8 16,11 15.5,16 C15.4,19 17,20 20,20.2 C24,20.5 24.5,23.5 20,24.2 C14,25 6.5,24.6 6,22.4 C5.6,20.6 9.4,20.4 10.4,19 C11.4,17.4 9.6,13 9,9 Z" fill="#40c838" stroke="#208818" stroke-width=".8"/></svg>
<svg style="left:1203px;top:67px" width="25" height="24" viewBox="0 0 25 24"><path d="M14.5,2 L23.5,6.5 L10,20.5 L1.5,15.5 Z" fill="#f4f4f4" stroke="#b0b0b0" stroke-width=".9"/><path d="M14.5,2 L23.5,6.5 L18,12.2 L9,7.4 Z" fill="#a8c4f4" stroke="#8aa4d8" stroke-width=".7"/><path d="M1.5,15.5 L10,20.5 L10,22.6 L1.5,17.6 Z" fill="#d4d4d4"/><path d="M10,20.5 L23.5,6.5 V8.6 L10,22.6 Z" fill="#c4c4c4"/></svg>
<svg style="left:1237px;top:67px" width="22" height="24" viewBox="0 0 22 24"><path d="M2,2.5 L20,21.5" stroke="#6a6a6a" stroke-width="3" stroke-linecap="round"/><path d="M2,2.5 L20,21.5" stroke="#c4c4c4" stroke-width="1" stroke-linecap="round"/></svg>
<svg style="left:1269px;top:67px" width="24" height="25" viewBox="0 0 24 25"><rect x=".8" y=".8" width="13.4" height="12.4" fill="#e8c000" stroke="#a88800" stroke-width=".9"/><circle cx="16.4" cy="12.6" r="6.2" fill="#e8c000" stroke="#a88800" stroke-width=".9"/><path d="M11.4,8.4 L17,23.4 H5.8 Z" fill="#e8c000" stroke="#a88800" stroke-width=".9"/></svg>
<i style="left:1302px;top:67px;width:24px;height:24px;border:1.3px solid #111;background:linear-gradient(135deg,#d4d8fc,#6c7cf4 55%,#2c3cf0)"></i>
<svg style="left:2px;top:41px" width="15" height="16" viewBox="0 0 15 16"><rect x="1" y="1" width="12.5" height="13.5" rx="1.5" fill="#9a9a9a" stroke="#6a6a6a" stroke-width=".7"/><rect x="6.2" y="1.5" width="3" height="8" fill="#e81010"/><rect x="6.2" y="11" width="3" height="2.8" fill="#e81010"/><rect x="3.8" y="11.6" width="2" height="2" fill="#222"/></svg>
<i style="left:1789.7px;top:38.5px;width:17.5px;height:18px;border:1px solid #dcdcdc;border-radius:3px;background:#f5f5f5"></i><svg style="left:1793px;top:42px" width="11" height="11" viewBox="0 0 11 11"><rect x=".5" y=".5" width="10" height="10" rx="2.2" fill="#f4f4f4" stroke="#555"/><rect x="2.2" y="4.6" width="6.6" height="1.8" fill="#444"/></svg><i style="left:1809px;top:38.5px;width:17.5px;height:18px;border:1px solid #dcdcdc;border-radius:3px;background:#f5f5f5"></i><svg style="left:1812px;top:42px" width="11" height="11" viewBox="0 0 11 11"><rect x=".5" y=".5" width="10" height="10" rx="2.2" fill="#f4f4f4" stroke="#555"/><rect x="4.5" y="2.5" width="4" height="4" rx="1" fill="none" stroke="#555" stroke-width=".9"/><rect x="2.5" y="4.5" width="4" height="4" rx="1" fill="#f4f4f4" stroke="#555" stroke-width=".9"/></svg><i style="left:1829.5px;top:38.5px;width:17.5px;height:18px;border:1px solid #dcdcdc;border-radius:3px;background:#f5f5f5"></i><svg style="left:1833px;top:42px" width="11" height="11" viewBox="0 0 11 11"><rect x=".5" y=".5" width="10" height="10" rx="2.2" fill="#f4f4f4" stroke="#555"/><path d="M2.8,2.8 L8.2,8.2 M8.2,2.8 L2.8,8.2" stroke="#444" stroke-width="1.7"/></svg>
<i style="left:266px;top:79px;width:12px;height:12px;border-radius:50%;background:radial-gradient(closest-side,#fff 0,rgba(255,255,255,0) 92%),conic-gradient(from 90deg,#f00,#f0f,#00f,#0ff,#0f0,#ff0,#f00)"></i></div>
<div id="left"><span class="dt" style="left:5.3px;top:100px">Items</span>
<svg class="dk" style="left:365px;top:102px" width="12" height="12" viewBox="0 0 12 12"><rect x=".5" y=".5" width="11" height="11" rx="2.5" fill="#f6f6f6" stroke="#555"/><rect x="4.5" y="2.5" width="5" height="5" rx="1" fill="none" stroke="#444"/><rect x="2.5" y="4.5" width="5" height="5" rx="1" fill="#f6f6f6" stroke="#444"/></svg><svg class="dk" style="left:380px;top:102px" width="12" height="12" viewBox="0 0 12 12"><rect x=".5" y=".5" width="11" height="11" rx="2.5" fill="#f6f6f6" stroke="#555"/><path d="M3.2,3.2 L8.8,8.8 M8.8,3.2 L3.2,8.8" stroke="#333" stroke-width="1.8"/></svg>
<div class="lst" style="left:10px;top:127px;width:374px;height:271px"></div>
<div class="vsb" style="left:369px;top:128px;width:14px;height:269px;right:auto"><i class="au"></i><b style="top:14px;height:26px"></b><i class="ad"></i></div>
<svg class="cb" style="left:17px;top:147.0px" width="14" height="14" viewBox="0 0 14 14"><path d="M2.6,6.4 L5.9,10.4 L10.6,2.4" fill="none" stroke="#111" stroke-width="1.9"/></svg>
<span class="dt" style="left:75.4px;top:146.10000000000002px">Headwear</span>
<svg class="cb" style="left:17px;top:199.0px" width="14" height="14" viewBox="0 0 14 14"><path d="M2.6,6.4 L5.9,10.4 L10.6,2.4" fill="none" stroke="#111" stroke-width="1.9"/></svg>
<span class="dt" style="left:75.4px;top:198.10000000000002px">Hair</span>
<svg class="cb" style="left:17px;top:251.0px" width="14" height="14" viewBox="0 0 14 14"><path d="M2.6,6.4 L5.9,10.4 L10.6,2.4" fill="none" stroke="#111" stroke-width="1.9"/></svg>
<span class="dt" style="left:59.5px;top:250.10000000000002px">Mouth</span>
<svg class="cb" style="left:17px;top:303.0px" width="14" height="14" viewBox="0 0 14 14"><path d="M2.6,6.4 L5.9,10.4 L10.6,2.4" fill="none" stroke="#111" stroke-width="1.9"/></svg>
<span class="dt" style="left:75.4px;top:302.1px">Eyebrows</span>
<svg class="cb" style="left:17px;top:355.0px" width="14" height="14" viewBox="0 0 14 14"><path d="M2.6,6.4 L5.9,10.4 L10.6,2.4" fill="none" stroke="#111" stroke-width="1.9"/></svg>
<span class="dt" style="left:75.4px;top:354.1px">Belt [Up]</span>
<svg style="left:29.2px;top:129.2px;overflow:visible" width="52" height="93" viewBox="0 0 140 250"><g transform="scale(1)"><use href="#hat"/></g></svg>
<svg style="left:36px;top:197px" width="36" height="20" viewBox="0 0 36 20"><path d="M2.5,2 L9.5,2 L7.6,8.5 L11,15 L6.5,17.5 L2,15 L5.4,8.5 Z" fill="#7a3a0c"/><path d="M24.5,2 L30.5,2 L30,8.5 L32.6,15 L28,17.5 L23.4,15 L26.8,8.5 Z" fill="#7a3a0c"/></svg>
<i style="left:41.2px;top:255.3px;width:10.2px;height:2.2px;border-radius:1px;background:#a8948c"></i>
<svg style="left:36px;top:304px" width="36" height="12" viewBox="0 0 36 12"><path d="M1.5,7 C4,4.5 8,4.8 11.8,7" fill="none" stroke="#6a2e08" stroke-width="2"/><path d="M21.8,7 C25,4.8 29.5,4.5 32.5,6.8" fill="none" stroke="#6a2e08" stroke-width="2"/></svg>
<svg style="left:36px;top:352px" width="36" height="18" viewBox="0 0 36 18"><path d="M2.5,5 C8,12.5 24,13.5 31,9.5" fill="none" stroke="#8a5434" stroke-width="4" stroke-linecap="round"/><path d="M2.5,4.5 C8,11.5 24,12.5 31,8.5" fill="none" stroke="#b07a58" stroke-width="1.4" stroke-linecap="round" stroke-dasharray="2.5 1.5"/></svg>
<svg style="left:28px;top:406px" width="28" height="28" viewBox="0 0 28 28"><path d="M3.5,3.5 H16 L20.5,8 V24.5 H3.5 Z" fill="#fafafa" stroke="#b0b0b0"/><path d="M16,3.5 V8 H20.5" fill="#e4e4e4" stroke="#b0b0b0"/><path d="M6,19 L7.2,14.8 L16.5,5.5 L19.5,8.5 L10.2,17.8 Z" fill="#f4a020" stroke="#b86c10" stroke-width=".7"/><path d="M6,19 L7.2,14.8 L10.2,17.8 Z" fill="#f0d8b0"/><path d="M16.5,5.5 L19.5,8.5 L21,7 L18,4 Z" fill="#e06060"/><path d="M15,15.5 h4 v-4 h3.5 v4 h4 v3.5 h-4 v4 h-3.5 v-4 h-4 z" fill="#38d038" stroke="#108810" stroke-width=".8"/></svg>
<svg style="left:79px;top:406px" width="26" height="26" viewBox="0 0 26 26"><defs><linearGradient id="gg1" x1="0" y1="0" x2="0" y2="1"><stop offset="0" stop-color="#e6e6e6"/><stop offset="1" stop-color="#b8b8b8"/></linearGradient></defs><path d="M13,3 L24.5,15.5 Q25,18.5 23,18.5 H3 Q1,18.5 1.5,15.5 Z" fill="url(#gg1)" stroke="#c4c4c4" stroke-width=".8"/><path d="M13,8 L20,16 H6 Z" fill="#d8d8d8" opacity=".6"/></svg>
<svg style="left:131px;top:407px" width="26" height="26" viewBox="0 0 26 26"><path d="M13,23 L1.5,8.5 Q1,5 3,5 H23 Q25,5 24.5,8.5 Z" fill="url(#gg1)" stroke="#c4c4c4" stroke-width=".8"/><path d="M13,19 L6,9 H20 Z" fill="#c8c8c8" opacity=".6"/></svg>
<svg style="left:183px;top:406px" width="26" height="26" viewBox="0 0 26 26"><circle cx="13" cy="13" r="11" fill="#f2f2f2" stroke="#c0c0c0" stroke-width="1.2"/><circle cx="13" cy="13" r="8.8" fill="none" stroke="#d4d4d4" stroke-width="1"/><rect x="9" y="12" width="8" height="2.4" rx=".6" fill="#8c8c8c"/></svg>
<svg style="left:236px;top:406px" width="26" height="28" viewBox="0 0 26 28"><path d="M3,4 L12,2.5 V23.5 L3,22.5 Z" fill="#f4f4f4" stroke="#cfcfcf"/><path d="M12,2.5 H21 L21.5,22 Q18,25 12,23.5 Z" fill="#f8f8f8" stroke="#cfcfcf"/><path d="M12,24 Q19,26 23,23" fill="none" stroke="#d8d8d8" stroke-width="1.5"/></svg>
<svg style="left:288px;top:406px" width="26" height="28" viewBox="0 0 26 28"><rect x="2.5" y="2.5" width="19" height="21" rx="1" fill="#e4e4e4" stroke="#bdbdbd"/><path d="M2.5,9.5 H21.5 M2.5,16.5 H21.5 M6,2.5 V23.5 M18,2.5 V23.5" stroke="#b4b4b4" stroke-width="1.2"/><path d="M9,6 h6 M9,13 h6 M9,20 h6" stroke="#c8c8c8" stroke-width="2"/></svg>
<svg style="left:342px;top:408px" width="20" height="26" viewBox="0 0 20 26"><path d="M4,4 Q10,1.5 16,4 V22 Q10,24.5 4,22 Z" fill="#f0f0f0" stroke="#d0d0d0"/><ellipse cx="10" cy="4.2" rx="6" ry="1.8" fill="#e8e8e8" stroke="#d0d0d0" stroke-width=".7"/><circle cx="10" cy="14" r="3" fill="none" stroke="#c4c4c4" stroke-width="1.2" stroke-dasharray="2.4 1.2"/></svg>
<i style="left:190px;top:446px;width:17px;height:1px;background:repeating-linear-gradient(90deg,#b8b8b8 0 1px,transparent 1px 3px)"></i>
<span class="dt" style="left:5.3px;top:451px">Preview</span>
<svg class="dk" style="left:365px;top:454px" width="12" height="12" viewBox="0 0 12 12"><rect x=".5" y=".5" width="11" height="11" rx="2.5" fill="#f6f6f6" stroke="#555"/><rect x="4.5" y="2.5" width="5" height="5" rx="1" fill="none" stroke="#444"/><rect x="2.5" y="4.5" width="5" height="5" rx="1" fill="#f6f6f6" stroke="#444"/></svg><svg class="dk" style="left:380px;top:454px" width="12" height="12" viewBox="0 0 12 12"><rect x=".5" y=".5" width="11" height="11" rx="2.5" fill="#f6f6f6" stroke="#555"/><path d="M3.2,3.2 L8.8,8.8 M8.8,3.2 L3.2,8.8" stroke="#333" stroke-width="1.8"/></svg>
<div class="combo" style="left:10px;top:478.5px;width:272px;height:24px"><span style="left:4.5px;top:2.5px">Down</span><i class="ca" style="left:255px;top:10px"></i></div>
<div class="btn" style="left:288px;top:478.5px;width:28px;height:23.5px"></div>
<svg style="left:292px;top:481px" width="20" height="19" viewBox="0 0 20 19"><path d="M2.5,2.5 H13.5 L17.5,5 V15.5 H2.5 Z" fill="#e8f0f8" stroke="#9ab0c8"/><circle cx="9" cy="8.5" r="4.6" fill="#d4e6f8" fill-opacity=".8" stroke="#8aa4c4" stroke-width="1.3"/><path d="M12.5,12 L17,16.5" stroke="#3a3a3a" stroke-width="2.4" stroke-linecap="round"/></svg>
<svg style="left:326px;top:480px" width="20" height="20" viewBox="0 0 20 20"><path d="M8.5,11.5 L2.5,17.5" stroke="#e89428" stroke-width="2.6" stroke-linecap="round"/><path d="M8.5,11.5 L2.5,17.5" stroke="#f8c060" stroke-width="1" stroke-linecap="round"/><circle cx="12" cy="7.5" r="5.2" fill="#e4eefc" stroke="#7f96c8" stroke-width="1.3"/><path d="M9.5,7.5 h5 M12,5 v5" stroke="#334" stroke-width="1.2" fill="none"/></svg>
<svg style="left:360px;top:480px" width="20" height="20" viewBox="0 0 20 20"><path d="M8.5,11.5 L2.5,17.5" stroke="#e89428" stroke-width="2.6" stroke-linecap="round"/><path d="M8.5,11.5 L2.5,17.5" stroke="#f8c060" stroke-width="1" stroke-linecap="round"/><circle cx="12" cy="7.5" r="5.2" fill="#e4eefc" stroke="#7f96c8" stroke-width="1.3"/><path d="M9.8,7.5 h4.4" stroke="#334" stroke-width="1.2" fill="none"/></svg>
<div class="pf" style="left:10px;top:509.5px;width:374px;height:481.5px"></div>
<div class="ck" style="left:121.5px;top:600px;width:150.5px;height:300px;background-position:8px 0"></div>
<svg class="c" style="left:130.5px;top:631px" width="140" height="250"><use href="#pview"/></svg>
<svg style="left:19px;top:1003px" width="13" height="14" viewBox="0 0 13 14"><path d="M1.5,1.2 L11.5,6.8 L1.5,12.6 Z" fill="#1c6ee0" stroke="#1458c0" stroke-width=".8" stroke-linejoin="round"/></svg>
<i style="left:45px;top:1007px;width:227px;height:5px;border-radius:2.5px;background:#e0e0e0;border:1px solid #b4b4b4"></i>
<i style="left:45px;top:1007px;width:103px;height:5px;border-radius:2.5px;background:linear-gradient(#4a9ae0,#2a7ac8);border:1px solid #2468a8"></i>
<i style="left:141.5px;top:1003px;width:13px;height:13px;border-radius:3px;background:linear-gradient(#fcfcfc,#dcdcdc);border:1px solid #9a9a9a"></i>
<div class="spin" style="left:279.5px;top:998.5px;width:70.5px;height:23px"><span style="left:5px;top:2.5px">6/12</span><i class="sa"></i></div>
<div class="btn" style="left:356px;top:998.5px;width:27.5px;height:23px"></div>
<svg style="left:361px;top:1002px" width="18" height="17" viewBox="0 0 18 17"><path d="M13.5,4 A6,6 0 1 0 14.8,10" fill="none" stroke="#2a7ad0" stroke-width="3"/><path d="M10,1 L15.5,4.5 L10,7.5 Z" fill="#2a7ad0"/></svg>
<i style="left:396px;top:559px;width:1px;height:17px;background:repeating-linear-gradient(180deg,#b0b0b0 0 1px,transparent 1px 3px)"></i></div>
<div id="mdi"><div class="win" style="left:38px;top:49px;width:215px;height:374px"><div class="tb"><span class="tt" style="left:27.5px">Idle</span><i class="bmin"></i><i class="bmax"></i></div><div class="vp" style="width:192px;height:331px;background-position:0px 0px"><svg class="c" style="left:9px;top:38px" width="140" height="250" ><use href="#idle"/></svg><svg class="c" style="left:159px;top:38px" width="140" height="250" ><use href="#idle"/></svg><i class="dv" style="left:150px;top:0px;bottom:0"></i><i class="dh" style="top:300px;left:0px;right:0"></i></div><div class="vsb" style="height:331px"><i class="au"></i><b style="top:14px;height:69px"></b><i class="ad"></i></div><div class="hsb" style="width:192px"><i class="al"></i><b style="left:14px;width:27px"></b><i class="ar"></i></div></div><div class="win act" style="left:273px;top:52px;width:186px;height:351px"><div class="tb"><span class="tt" style="left:13.0px">Walk</span><i class="bmin"></i><i class="bmax"></i></div><div class="vp" style="width:163px;height:308px;background-position:4px 0px"><svg class="c" style="left:14.700000000000045px;top:36.5px" width="140" height="250" ><use href="#walk"/></svg><i class="dv" style="left:6px;top:0px;bottom:0"></i><i class="dv" style="left:156px;top:0px;bottom:0"></i><i class="dh" style="top:300px;left:0px;right:0"></i></div><div class="vsb" style="height:308px"><i class="au"></i><b style="top:14px;height:72px"></b><i class="ad"></i></div><div class="hsb" style="width:163px"><i class="al"></i><b style="left:43px;width:27px"></b><i class="ar"></i></div></div><div class="win" style="left:468px;top:28px;width:388px;height:439px"><div class="tb"><span class="tt" style="left:114.0px">Swing*</span><i class="bmin"></i><i class="bmax"></i></div><div class="vp" style="width:365px;height:396px;background-position:0px 0px"><svg class="c" style="left:109.29999999999995px;top:55.5px" width="140" height="250" ><use href="#swing"/></svg><i class="dv" style="left:354px;top:0px;bottom:0"></i><i class="dh" style="top:386px;left:0px;right:0"></i></div><div class="vsb" style="height:396px"><i class="au"></i><b style="top:14px;height:92px"></b><i class="ad"></i></div><div class="hsb" style="width:365px"><i class="al"></i><b style="left:216px;width:68px"></b><i class="ar"></i></div></div><div class="win" style="left:867px;top:20px;width:316px;height:478px"><div class="tb"><span class="tt" style="left:78.0px">Thrust*</span><i class="bmin"></i><i class="bmax"></i></div><div class="vp" style="width:293px;height:435px;background-position:6px 3px"><svg class="c" style="left:74px;top:45px" width="140" height="250" ><use href="#thrust"/></svg><i class="dh" style="top:398px;left:0px;width:290px"></i></div><div class="vsb" style="height:435px"><i class="au"></i><b style="top:14px;height:107px"></b><i class="ad"></i></div><div class="hsb" style="width:293px"><i class="al"></i><b style="left:129px;width:33px"></b><i class="ar"></i></div></div><div class="win" style="left:3px;top:518px;width:314px;height:369px"><div class="tb"><span class="tt" style="left:77.0px">Spell</span><i class="bmin"></i><i class="bmax"></i></div><div class="vp" style="width:291px;height:326px;background-position:0px 0px"><svg class="c" style="left:80.69999999999999px;top:54.700000000000045px" width="140" height="250" ><use href="#spell"/></svg><i class="dh" style="top:320px;left:0px;right:0"></i></div><div class="vsb" style="height:326px"><i class="au"></i><b style="top:14px;height:75px"></b><i class="ad"></i></div><div class="hsb" style="width:291px"><i class="al"></i><b style="left:14px;width:100px"></b><i class="ar"></i></div></div><div class="win" style="left:335px;top:534px;width:224px;height:352px"><div class="tb"><span class="tt" style="left:32.0px">Hurt</span><i class="bmin"></i><i class="bmax"></i></div><div class="vp" style="width:201px;height:309px;background-position:0px 0px"><svg class="c" style="left:35.5px;top:35px" width="140" height="250" ><use href="#hurt"/></svg><svg class="c" style="left:-108px;top:35px" width="140" height="250" ><use href="#idle"/></svg><i class="dv" style="left:31px;top:0px;bottom:0"></i><i class="dv" style="left:181.5px;top:0px;bottom:0"></i><i class="dh" style="top:300px;left:0px;right:0"></i></div><div class="vsb" style="height:309px"><i class="au"></i><b style="top:14px;height:72px"></b><i class="ad"></i></div><div class="hsb" style="width:201px"><i class="al"></i><b style="left:52px;width:60px"></b><i class="ar"></i></div></div><div class="win" style="left:569px;top:526px;width:255px;height:356px"><div class="tb"><span class="tt" style="left:47.5px">Bow*</span><i class="bmin"></i><i class="bmax"></i></div><div class="vp" style="width:232px;height:313px;background-position:0px 0px"><svg class="c" style="left:51px;top:46.700000000000045px" width="140" height="250" ><use href="#bow"/></svg><i class="dh" style="top:299.5px;left:0px;right:0"></i></div><div class="vsb" style="height:313px"><i class="au"></i><b style="top:14px;height:72px"></b><i class="ad"></i></div><div class="hsb" style="width:232px"><i class="al"></i><b style="left:119px;width:27px"></b><i class="ar"></i></div></div><div class="win" style="left:826px;top:524px;width:377px;height:384px"><div class="tb"><span class="tt" style="left:108.5px">Death</span><i class="bmin"></i><i class="bmax"></i></div><div class="vp" style="width:354px;height:341px;background-position:0px 0px"><svg class="c" style="left:0px;top:0px" width="400" height="400" ><use href="#death"/></svg><i class="dh" style="top:10px;left:0px;right:0"></i><i class="dv" style="left:351px;top:10px;height:320px"></i><i class="dh" style="top:329.5px;left:0px;right:0"></i></div><div class="vsb" style="height:341px"><i class="au"></i><b style="top:90px;height:82px"></b><i class="ad"></i></div><div class="hsb" style="width:354px"><i class="al"></i><b style="left:154px;width:40px"></b><i class="ar"></i></div></div></div>
<div id="right"><span class="dt" style="left:1631px;top:100px">History</span>
<svg class="dk" style="left:1821.5px;top:102.5px" width="12" height="12" viewBox="0 0 12 12"><rect x=".5" y=".5" width="11" height="11" rx="2.5" fill="#f6f6f6" stroke="#555"/><rect x="4.5" y="2.5" width="5" height="5" rx="1" fill="none" stroke="#444"/><rect x="2.5" y="4.5" width="5" height="5" rx="1" fill="#f6f6f6" stroke="#444"/></svg><svg class="dk" style="left:1836px;top:102.5px" width="12" height="12" viewBox="0 0 12 12"><rect x=".5" y=".5" width="11" height="11" rx="2.5" fill="#f6f6f6" stroke="#555"/><path d="M3.2,3.2 L8.8,8.8 M8.8,3.2 L3.2,8.8" stroke="#333" stroke-width="1.8"/></svg>
<div class="lst" style="left:1627px;top:119px;width:1223px;height:466px;width:223px"></div>
<div style="left:1628px;top:120px;width:221px;height:16.5px;background:#308cc6"></div>
<span class="dt" style="left:1631px;top:119.5px;color:#fff">&lt;Initial state&gt;</span>
<i style="left:1730px;top:588px;width:17px;height:1px;background:repeating-linear-gradient(90deg,#b8b8b8 0 1px,transparent 1px 3px)"></i>
<span class="dt" style="left:1631.5px;top:591.8px">Colors</span>
<svg class="dk" style="left:1822px;top:594.5px" width="12" height="12" viewBox="0 0 12 12"><rect x=".5" y=".5" width="11" height="11" rx="2.5" fill="#f6f6f6" stroke="#555"/><rect x="4.5" y="2.5" width="5" height="5" rx="1" fill="none" stroke="#444"/><rect x="2.5" y="4.5" width="5" height="5" rx="1" fill="#f6f6f6" stroke="#444"/></svg><svg class="dk" style="left:1836px;top:594.5px" width="12" height="12" viewBox="0 0 12 12"><rect x=".5" y=".5" width="11" height="11" rx="2.5" fill="#f6f6f6" stroke="#555"/><path d="M3.2,3.2 L8.8,8.8 M8.8,3.2 L3.2,8.8" stroke="#333" stroke-width="1.8"/></svg>
<svg style="left:1638px;top:619px" width="200" height="60" viewBox="0 0 200 60" shape-rendering="crispEdges"><defs><pattern id="pck" width="8" height="8" patternUnits="userSpaceOnUse"><rect width="8" height="8" fill="#fff"/><rect width="4" height="4" fill="#c4c4c4"/><rect x="4" y="4" width="4" height="4" fill="#c4c4c4"/></pattern></defs><rect x="0" y="40" width="200" height="20" fill="url(#pck)"/><rect x="0" y="0" width="10" height="10" fill="#000000"/><rect x="10" y="0" width="10" height="10" fill="#333333"/><rect x="20" y="0" width="10" height="10" fill="#ff0000"/><rect x="30" y="0" width="10" height="10" fill="#ff5500"/><rect x="40" y="0" width="10" height="10" fill="#ffaa00"/><rect x="50" y="0" width="10" height="10" fill="#ffff00"/><rect x="60" y="0" width="10" height="10" fill="#aaff00"/><rect x="70" y="0" width="10" height="10" fill="#55ff00"/><rect x="80" y="0" width="10" height="10" fill="#00ff00"/><rect x="90" y="0" width="10" height="10" fill="#00ff55"/><rect x="100" y="0" width="10" height="10" fill="#00ffaa"/><rect x="110" y="0" width="10" height="10" fill="#00ffff"/><rect x="120" y="0" width="10" height="10" fill="#00aaff"/><rect x="130" y="0" width="10" height="10" fill="#0055ff"/><rect x="140" y="0" width="10" height="10" fill="#0000ff"/><rect x="150" y="0" width="10" height="10" fill="#5500ff"/><rect x="160" y="0" width="10" height="10" fill="#aa00ff"/><rect x="170" y="0" width="10" height="10" fill="#ff00ff"/><rect x="180" y="0" width="10" height="10" fill="#ff00aa"/><rect x="190" y="0" width="10" height="10" fill="#ff0055"/><rect x="0" y="10" width="10" height="10" fill="#ffffff"/><rect x="10" y="10" width="10" height="10" fill="#666666"/><rect x="20" y="10" width="10" height="10" fill="#ff8080"/><rect x="30" y="10" width="10" height="10" fill="#ffaa80"/><rect x="40" y="10" width="10" height="10" fill="#ffd480"/><rect x="50" y="10" width="10" height="10" fill="#ffff80"/><rect x="60" y="10" width="10" height="10" fill="#d4ff80"/><rect x="70" y="10" width="10" height="10" fill="#aaff80"/><rect x="80" y="10" width="10" height="10" fill="#80ff80"/><rect x="90" y="10" width="10" height="10" fill="#80ffaa"/><rect x="100" y="10" width="10" height="10" fill="#80ffd4"/><rect x="110" y="10" width="10" height="10" fill="#80ffff"/><rect x="120" y="10" width="10" height="10" fill="#80d4ff"/><rect x="130" y="10" width="10" height="10" fill="#80aaff"/><rect x="140" y="10" width="10" height="10" fill="#8080ff"/><rect x="150" y="10" width="10" height="10" fill="#aa80ff"/><rect x="160" y="10" width="10" height="10" fill="#d580ff"/><rect x="170" y="10" width="10" height="10" fill="#ff80ff"/><rect x="180" y="10" width="10" height="10" fill="#ff80d5"/><rect x="190" y="10" width="10" height="10" fill="#ff80aa"/><rect x="0" y="20" width="10" height="10" fill="#545454"/><rect x="10" y="20" width="10" height="10" fill="#999999"/><rect x="20" y="20" width="10" height="10" fill="#800000"/><rect x="30" y="20" width="10" height="10" fill="#802a00"/><rect x="40" y="20" width="10" height="10" fill="#805500"/><rect x="50" y="20" width="10" height="10" fill="#808000"/><rect x="60" y="20" width="10" height="10" fill="#558000"/><rect x="70" y="20" width="10" height="10" fill="#2a8000"/><rect x="80" y="20" width="10" height="10" fill="#008000"/><rect x="90" y="20" width="10" height="10" fill="#00802b"/><rect x="100" y="20" width="10" height="10" fill="#008055"/><rect x="110" y="20" width="10" height="10" fill="#008080"/><rect x="120" y="20" width="10" height="10" fill="#005580"/><rect x="130" y="20" width="10" height="10" fill="#002a80"/><rect x="140" y="20" width="10" height="10" fill="#000080"/><rect x="150" y="20" width="10" height="10" fill="#2a0080"/><rect x="160" y="20" width="10" height="10" fill="#550080"/><rect x="170" y="20" width="10" height="10" fill="#800080"/><rect x="180" y="20" width="10" height="10" fill="#800055"/><rect x="190" y="20" width="10" height="10" fill="#80002b"/><rect x="0" y="30" width="10" height="10" fill="#ababab"/><rect x="10" y="30" width="10" height="10" fill="#cccccc"/><rect x="20" y="30" width="10" height="10" fill="#804040"/><rect x="30" y="30" width="10" height="10" fill="#805540"/><rect x="40" y="30" width="10" height="10" fill="#806a40"/><rect x="50" y="30" width="10" height="10" fill="#808040"/><rect x="60" y="30" width="10" height="10" fill="#6a8040"/><rect x="70" y="30" width="10" height="10" fill="#558040"/><rect x="80" y="30" width="10" height="10" fill="#408040"/><rect x="90" y="30" width="10" height="10" fill="#408055"/><rect x="100" y="30" width="10" height="10" fill="#40806a"/><rect x="110" y="30" width="10" height="10" fill="#408080"/><rect x="120" y="30" width="10" height="10" fill="#406a80"/><rect x="130" y="30" width="10" height="10" fill="#405580"/><rect x="140" y="30" width="10" height="10" fill="#404080"/><rect x="150" y="30" width="10" height="10" fill="#554080"/><rect x="160" y="30" width="10" height="10" fill="#6a4080"/><rect x="170" y="30" width="10" height="10" fill="#804080"/><rect x="180" y="30" width="10" height="10" fill="#80406a"/><rect x="190" y="30" width="10" height="10" fill="#804055"/><rect x="20" y="40" width="10" height="10" fill="#ff0000" fill-opacity="0.5"/><rect x="30" y="40" width="10" height="10" fill="#ff5500" fill-opacity="0.5"/><rect x="40" y="40" width="10" height="10" fill="#ffaa00" fill-opacity="0.5"/><rect x="50" y="40" width="10" height="10" fill="#ffff00" fill-opacity="0.5"/><rect x="60" y="40" width="10" height="10" fill="#aaff00" fill-opacity="0.5"/><rect x="70" y="40" width="10" height="10" fill="#55ff00" fill-opacity="0.5"/><rect x="80" y="40" width="10" height="10" fill="#00ff00" fill-opacity="0.5"/><rect x="90" y="40" width="10" height="10" fill="#00ff55" fill-opacity="0.5"/><rect x="100" y="40" width="10" height="10" fill="#00ffaa" fill-opacity="0.5"/><rect x="110" y="40" width="10" height="10" fill="#00ffff" fill-opacity="0.5"/><rect x="120" y="40" width="10" height="10" fill="#00aaff" fill-opacity="0.5"/><rect x="130" y="40" width="10" height="10" fill="#0055ff" fill-opacity="0.5"/><rect x="140" y="40" width="10" height="10" fill="#0000ff" fill-opacity="0.5"/><rect x="150" y="40" width="10" height="10" fill="#5500ff" fill-opacity="0.5"/><rect x="160" y="40" width="10" height="10" fill="#aa00ff" fill-opacity="0.5"/><rect x="170" y="40" width="10" height="10" fill="#ff00ff" fill-opacity="0.5"/><rect x="180" y="40" width="10" height="10" fill="#ff00aa" fill-opacity="0.5"/><rect x="190" y="40" width="10" height="10" fill="#ff0055" fill-opacity="0.5"/><rect x="20" y="50" width="10" height="10" fill="#800000" fill-opacity="0.5"/><rect x="30" y="50" width="10" height="10" fill="#802a00" fill-opacity="0.5"/><rect x="40" y="50" width="10" height="10" fill="#805500" fill-opacity="0.5"/><rect x="50" y="50" width="10" height="10" fill="#808000" fill-opacity="0.5"/><rect x="60" y="50" width="10" height="10" fill="#558000" fill-opacity="0.5"/><rect x="70" y="50" width="10" height="10" fill="#2a8000" fill-opacity="0.5"/><rect x="80" y="50" width="10" height="10" fill="#008000" fill-opacity="0.5"/><rect x="90" y="50" width="10" height="10" fill="#00802b" fill-opacity="0.5"/><rect x="100" y="50" width="10" height="10" fill="#008055" fill-opacity="0.5"/><rect x="110" y="50" width="10" height="10" fill="#008080" fill-opacity="0.5"/><rect x="120" y="50" width="10" height="10" fill="#005580" fill-opacity="0.5"/><rect x="130" y="50" width="10" height="10" fill="#002a80" fill-opacity="0.5"/><rect x="140" y="50" width="10" height="10" fill="#000080" fill-opacity="0.5"/><rect x="150" y="50" width="10" height="10" fill="#2a0080" fill-opacity="0.5"/><rect x="160" y="50" width="10" height="10" fill="#550080" fill-opacity="0.5"/><rect x="170" y="50" width="10" height="10" fill="#800080" fill-opacity="0.5"/><rect x="180" y="50" width="10" height="10" fill="#800055" fill-opacity="0.5"/><rect x="190" y="50" width="10" height="10" fill="#80002b" fill-opacity="0.5"/><rect x="0" y="40" width="10" height="10" fill="#000" fill-opacity="0.5"/><rect x="10" y="40" width="10" height="10" fill="#333" fill-opacity="0.45"/><rect x="0" y="50" width="10" height="10" fill="#fff" fill-opacity="0.5"/><rect x="10" y="50" width="10" height="10" fill="#666" fill-opacity="0.45"/></svg>
<div class="btn" style="left:1636px;top:685.5px;width:99px;height:24.5px"><span style="position:absolute;left:24.3px;top:3px;line-height:18px;white-space:nowrap">Add color</span></div>
<i style="left:1643px;top:690px;width:15.5px;height:15.5px;border-radius:50%;background:radial-gradient(closest-side,#fff 0,rgba(255,255,255,0) 92%),conic-gradient(from 90deg,#f00,#f0f,#00f,#0ff,#0f0,#ff0,#f00)"></i><svg style="left:1642.5px;top:689.5px" width="17" height="17" viewBox="0 0 17 17"><path d="M8.5,12.5 h7 M12,9 v7" stroke="#301030" stroke-width="1.5"/></svg>
<div class="btn" style="left:1741px;top:685.5px;width:99px;height:24.5px"><span style="position:absolute;left:18.5px;top:3px;line-height:18px;white-space:nowrap">Palette</span><i class="ca" style="left:87px;top:10px;border-width:3.5px;border-top-width:4px;border-bottom-width:0"></i></div>
<i style="left:1636px;top:716.5px;width:204px;height:1px;background:#c6c6c6"></i>
<i style="left:1636px;top:725px;width:60px;height:24px;background:#ffd59a;border:1px solid #000;box-shadow:inset 0 0 0 2.5px #00c8f0,inset 0 0 0 3.5px #000"></i>
<i style="left:1780px;top:725px;width:60px;height:24px;background:#fff;border:1px solid #000;box-shadow:inset 0 0 0 2px #fff,inset 0 0 0 3px #000"></i>
<svg style="left:1725px;top:728px" width="26" height="18" viewBox="0 0 26 18"><path d="M2,6.5 C6,3 9,9.5 13,6 C15.5,4 17,4.5 19,5" fill="none" stroke="#1a0a2a" stroke-width="1.8"/><path d="M18.5,1.5 L25,5.2 L18.5,8.8 Z" fill="#1a0a2a"/><path d="M24,11.5 C20,15 17,8.5 13,12 C10.5,14 9,13.5 7,13" fill="none" stroke="#1a0a2a" stroke-width="1.8"/><path d="M7.5,9.2 L1,12.8 L7.5,16.5 Z" fill="#1a0a2a"/></svg>
<span class="dt" style="left:1636px;top:754.5px">Red Green Blue</span><i style="left:1748px;top:762px;width:92px;height:1px;background:#c6c6c6"></i>
<span class="dt" style="left:1636px;top:873.3px">Hue Saturation Value</span><i style="left:1787.5px;top:881.5px;width:52.5px;height:1px;background:#c6c6c6"></i>
<span class="dt" style="left:1636px;top:782.5px">R</span>
<i style="left:1655px;top:780px;width:120px;height:18px;border:1px solid #333;background:linear-gradient(90deg,#00d59a,#ffd59a)"></i>
<i style="left:1770.8px;top:796.5px;width:0;height:0;border:3.2px solid transparent;border-bottom:5px solid #000;border-top-width:0"></i>
<div class="spin" style="left:1783px;top:779px;width:57px;height:24px"><span style="left:5.3px;top:3.2px">255</span><i class="sa" style="width:14px"></i></div>
<span class="dt" style="left:1636px;top:814.5px">G</span>
<i style="left:1655px;top:812px;width:120px;height:18px;border:1px solid #333;background:linear-gradient(90deg,#ff009a,#ffff9a)"></i>
<i style="left:1750.6px;top:828.5px;width:0;height:0;border:3.2px solid transparent;border-bottom:5px solid #000;border-top-width:0"></i>
<div class="spin" style="left:1783px;top:811px;width:57px;height:24px"><span style="left:5.3px;top:3.2px">213</span><i class="sa" style="width:14px"></i></div>
<span class="dt" style="left:1636px;top:846.5px">B</span>
<i style="left:1655px;top:844px;width:120px;height:18px;border:1px solid #333;background:linear-gradient(90deg,#ffd500,#ffd5ff)"></i>
<i style="left:1723.5px;top:860.5px;width:0;height:0;border:3.2px solid transparent;border-bottom:5px solid #000;border-top-width:0"></i>
<div class="spin" style="left:1783px;top:843px;width:57px;height:24px"><span style="left:5.3px;top:3.2px">154</span><i class="sa" style="width:14px"></i></div>
<span class="dt" style="left:1636px;top:902.0px">H</span>
<i style="left:1655px;top:899.5px;width:120px;height:18px;border:1px solid #333;background:linear-gradient(90deg,#ff9a9a 0.0%,#ffcd9a 8.3%,#ffff9a 16.7%,#cdff9a 25.0%,#9aff9a 33.3%,#9affcd 41.7%,#9affff 50.0%,#9acdff 58.3%,#9a9aff 66.7%,#cd9aff 75.0%,#ff9aff 83.3%,#ff9acd 91.7%,#ff9a9a 100.0%)"></i>
<i style="left:1663.6px;top:916.0px;width:0;height:0;border:3.2px solid transparent;border-bottom:5px solid #000;border-top-width:0"></i>
<div class="spin" style="left:1783px;top:898.5px;width:57px;height:24px"><span style="left:5.3px;top:3.2px">35</span><i class="sa" style="width:14px"></i></div>
<span class="dt" style="left:1636px;top:934.0px">S</span>
<i style="left:1655px;top:931.5px;width:120px;height:18px;border:1px solid #333;background:linear-gradient(90deg,#fff,#ff9500)"></i>
<i style="left:1698.6px;top:948.0px;width:0;height:0;border:3.2px solid transparent;border-bottom:5px solid #000;border-top-width:0"></i>
<div class="spin" style="left:1783px;top:930.5px;width:57px;height:24px"><span style="left:5.3px;top:3.2px">101</span><i class="sa" style="width:14px"></i></div>
<span class="dt" style="left:1636px;top:966.0px">V</span>
<i style="left:1655px;top:963.5px;width:120px;height:18px;border:1px solid #333;background:linear-gradient(90deg,#000,#ffd59a)"></i>
<i style="left:1770.8px;top:980.0px;width:0;height:0;border:3.2px solid transparent;border-bottom:5px solid #000;border-top-width:0"></i>
<div class="spin" style="left:1783px;top:962.5px;width:57px;height:24px"><span style="left:5.3px;top:3.2px">255</span><i class="sa" style="width:14px"></i></div>
<span class="dt" style="left:1636px;top:998.0px">Opacity</span>
<i style="left:1698px;top:995.5px;width:77px;height:18px;border:1px solid #333;background:linear-gradient(90deg,rgba(255,213,154,0),#ffd59a),conic-gradient(#c0c0c0 25%,#fff 0 50%,#c0c0c0 0 75%,#fff 0) 0 0/8px 8px"></i>
<i style="left:1770.8px;top:1012.0px;width:0;height:0;border:3.2px solid transparent;border-bottom:5px solid #000;border-top-width:0"></i>
<div class="spin" style="left:1783px;top:994.5px;width:57px;height:24px"><span style="left:5.3px;top:3.2px">255</span><i class="sa" style="width:14px"></i></div></div>
<div id="status"><span>Ready</span></div>
<div id="banner"><span style="left:359.0px;transform:scaleX(1.0923)">Make</span><span style="left:468.4px;transform:scaleX(1.0682)">Action-RPG</span><span style="left:686.7px;transform:scaleX(1.1507)">characters</span><span style="left:895.2px;transform:scaleX(1.2169)">with</span><span style="left:986.0px;transform:scaleX(1.1357)">all</span><span style="left:1039.1px;transform:scaleX(1.2251)">the</span><span style="left:1113.0px;transform:scaleX(1.1425)">animations</span><span style="left:1330.3px;transform:scaleX(1.1072)">you</span><span style="left:1410.7px;transform:scaleX(1.1022)">need!</span></div>
<div id="frame"></div>
</body></html>
